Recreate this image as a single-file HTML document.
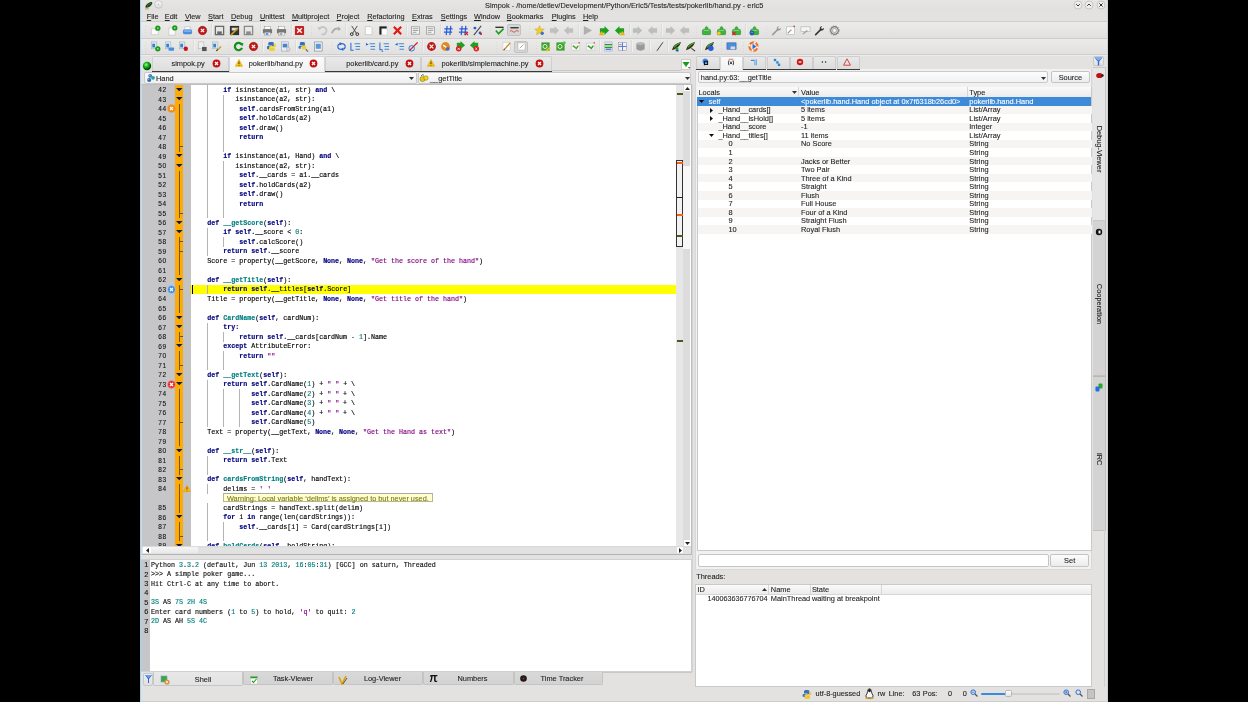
<!DOCTYPE html><html><head><meta charset="utf-8"><style>
*{margin:0;padding:0}
html,body{width:1248px;height:702px;overflow:hidden;background:#000}
div{position:absolute}
.t{white-space:pre;font-family:"Liberation Sans",sans-serif;-webkit-text-stroke:0.1px currentColor}
.m{white-space:pre;font-family:"Liberation Mono",monospace;-webkit-text-stroke:0.15px currentColor}
u{text-decoration:underline;text-underline-offset:1px}
</style></head><body><div style="left:0;top:0;width:1248px;height:702px;will-change:transform"><div style="left:140px;top:0px;width:968px;height:702px;background:#e3e2e1"></div>
<div style="left:140px;top:0px;width:1px;height:702px;background:#a6d2f2"></div>
<div style="left:1107px;top:0px;width:1px;height:702px;background:#d0d0d0"></div>
<div style="left:141px;top:701px;width:966px;height:1px;background:#cdcdcd"></div>
<div style="left:141px;top:0px;width:966px;height:11px;background:linear-gradient(#e6e5e4,#e1e0df)"></div>
<div class="t" style="left:485px;top:0.5px;font-size:7.38px;line-height:10px;color:#262626">Simpok - /home/detlev/Development/Python/Eric5/Tests/tests/pokerlib/hand.py - eric5</div>
<svg style="position:absolute;left:144px;top:0.5px;" width="9" height="9" viewBox="0 0 9 9"><path d="M1.2 6.2Q2 3 6 1.3Q8.6 0.6 8.2 2.4Q7 5.6 2.6 6.8Z" fill="#1e3a12"/><path d="M3 5.2Q5 3.5 7.2 2" stroke="#3aa03a" stroke-width="0.9" fill="none"/><path d="M1.2 7.8H4.8" stroke="#b8a860" stroke-width="1.1"/></svg>
<svg style="position:absolute;left:154.1px;top:0.3px;" width="9" height="9" viewBox="0 0 9 9"><defs><linearGradient id="rb" x1="0" y1="0" x2="0" y2="1"><stop offset="0" stop-color="#fafafa"/><stop offset="1" stop-color="#d8d8d8"/></linearGradient></defs><circle cx="4.5" cy="4.5" r="3.8" fill="url(#rb)" stroke="#bdbdbd" stroke-width="0.7"/><circle cx="4.5" cy="4.3" r="0.5" fill="#999"/></svg>
<svg style="position:absolute;left:1072.5px;top:-0.5px;" width="10" height="10" viewBox="0 0 10 10"><circle cx="5" cy="5" r="4" fill="#eeeeee" stroke="#bdbdbd" stroke-width="0.8"/><path d="M3.2 4.2 L5 6 L6.8 4.2" stroke="#333" stroke-width="1" fill="none"/></svg>
<svg style="position:absolute;left:1084px;top:-0.5px;" width="10" height="10" viewBox="0 0 10 10"><circle cx="5" cy="5" r="4" fill="#eeeeee" stroke="#bdbdbd" stroke-width="0.8"/><path d="M3.2 5.8 L5 4 L6.8 5.8" stroke="#333" stroke-width="1" fill="none"/></svg>
<svg style="position:absolute;left:1095.6px;top:-0.5px;" width="10" height="10" viewBox="0 0 10 10"><circle cx="5" cy="5" r="4" fill="#eeeeee" stroke="#bdbdbd" stroke-width="0.8"/><path d="M3.4 3.4 L6.6 6.6 M6.6 3.4 L3.4 6.6" stroke="#333" stroke-width="1" fill="none"/></svg>
<div class="t" style="left:146.7px;top:12px;font-size:7.3px;line-height:10px;color:#222"><u>F</u>ile</div>
<div class="t" style="left:164.8px;top:12px;font-size:7.3px;line-height:10px;color:#222"><u>E</u>dit</div>
<div class="t" style="left:184.9px;top:12px;font-size:7.3px;line-height:10px;color:#222"><u>V</u>iew</div>
<div class="t" style="left:208.1px;top:12px;font-size:7.3px;line-height:10px;color:#222"><u>S</u>tart</div>
<div class="t" style="left:231px;top:12px;font-size:7.3px;line-height:10px;color:#222"><u>D</u>ebug</div>
<div class="t" style="left:259.9px;top:12px;font-size:7.3px;line-height:10px;color:#222"><u>U</u>nittest</div>
<div class="t" style="left:291.9px;top:12px;font-size:7.3px;line-height:10px;color:#222"><u>M</u>ultiproject</div>
<div class="t" style="left:336.6px;top:12px;font-size:7.3px;line-height:10px;color:#222"><u>P</u>roject</div>
<div class="t" style="left:367.2px;top:12px;font-size:7.3px;line-height:10px;color:#222"><u>R</u>efactoring</div>
<div class="t" style="left:412px;top:12px;font-size:7.3px;line-height:10px;color:#222"><u>E</u>xtras</div>
<div class="t" style="left:440.8px;top:12px;font-size:7.3px;line-height:10px;color:#222"><u>S</u>ettings</div>
<div class="t" style="left:474px;top:12px;font-size:7.3px;line-height:10px;color:#222"><u>W</u>indow</div>
<div class="t" style="left:506.8px;top:12px;font-size:7.3px;line-height:10px;color:#222"><u>B</u>ookmarks</div>
<div class="t" style="left:551.7px;top:12px;font-size:7.3px;line-height:10px;color:#222"><u>P</u>lugins</div>
<div class="t" style="left:583px;top:12px;font-size:7.3px;line-height:10px;color:#222"><u>H</u>elp</div>
<div style="left:141px;top:21px;width:966px;height:1px;background:#cdcdcd"></div>
<div style="left:141px;top:22px;width:966px;height:1px;background:#efefef"></div>
<div style="left:141px;top:22px;width:966px;height:16px;background:linear-gradient(#ebebea,#e1e0df)"></div>
<div style="left:141px;top:38px;width:966px;height:1px;background:#cdcdcd"></div>
<div style="left:141px;top:39px;width:966px;height:1px;background:#efefef"></div>
<div style="left:141px;top:39px;width:966px;height:15px;background:linear-gradient(#ebebea,#e1e0df)"></div>
<div style="left:141px;top:54px;width:966px;height:1px;background:#cdcdcd"></div>
<div style="left:141px;top:55px;width:966px;height:1px;background:#ececec"></div>
<div style="left:144.5px;top:25.5px;width:1px;height:1px;background:#d9d9d9"></div>
<div style="left:144.5px;top:28.5px;width:1px;height:1px;background:#d9d9d9"></div>
<div style="left:144.5px;top:31.5px;width:1px;height:1px;background:#d9d9d9"></div>
<div style="left:144.5px;top:34.5px;width:1px;height:1px;background:#d9d9d9"></div>
<div style="left:507.3px;top:23.8px;width:14.1px;height:12.6px;background:#d6d6d6;border:1px solid #c2c2c2;border-radius:2px;box-sizing:border-box"></div>
<svg style="position:absolute;left:149.6px;top:24.5px" width="11" height="11" viewBox="0 0 12 12"><path d="M1.5 4H9V10.5H1.5Z" fill="#fafafa" stroke="#bbb" stroke-width="0.6"/><circle cx="8.5" cy="3.5" r="2.9" fill="#1a9a1a"/><path d="M8.5 2.6V4.4M7.6 3.5H9.4" stroke="#e8ffe8" stroke-width="0.6"/></svg>
<svg style="position:absolute;left:166.5px;top:24.5px" width="11" height="11" viewBox="0 0 12 12"><path d="M2 3H7L9 5V11H2Z" fill="#fafafa" stroke="#bbb" stroke-width="0.6"/><circle cx="8.5" cy="3.2" r="2.9" fill="#1a9a1a"/><path d="M8.5 2.3V4.1M7.6 3.2H9.4" stroke="#e8ffe8" stroke-width="0.6"/></svg>
<svg style="position:absolute;left:181.9px;top:24.5px" width="11" height="11" viewBox="0 0 12 12"><path d="M3 2H9V5H3Z" fill="#fff" stroke="#9ab" stroke-width="0.5"/><rect x="1" y="5" width="10" height="5" rx="1.5" fill="#4a8ee0"/><rect x="2" y="6" width="8" height="1.2" fill="#9cc4f0"/></svg>
<svg style="position:absolute;left:196.7px;top:24.5px" width="11" height="11" viewBox="0 0 12 12"><circle cx="6" cy="6" r="4.6" fill="#c01818"/><circle cx="6" cy="6" r="4.6" fill="none" stroke="#901010" stroke-width="0.6"/><path d="M4.2 4.2L7.8 7.8M7.8 4.2L4.2 7.8" stroke="#fff" stroke-width="1.3"/></svg>
<div style="left:211.3px;top:24px;width:1px;height:12px;background:#dcdcdc;box-shadow:1px 0 0 #f0f0f0"></div>
<svg style="position:absolute;left:214.2px;top:24.5px" width="11" height="11" viewBox="0 0 12 12"><rect x="1.5" y="1.5" width="9" height="9" fill="none" stroke="#6a6a6a" stroke-width="1.4"/><rect x="3.5" y="7" width="5" height="3" fill="#6a6a6a"/></svg>
<svg style="position:absolute;left:228.7px;top:24.5px" width="11" height="11" viewBox="0 0 12 12"><rect x="1.5" y="1.5" width="9" height="9" fill="#333" stroke="#222" stroke-width="1"/><rect x="3" y="3" width="6" height="3" fill="#ddd"/><path d="M2 11L10 3" stroke="#c9a020" stroke-width="1.8"/></svg>
<svg style="position:absolute;left:243.2px;top:24.5px" width="11" height="11" viewBox="0 0 12 12"><rect x="1.5" y="1.5" width="9" height="9" fill="none" stroke="#8a8a8a" stroke-width="1.4"/><rect x="3.5" y="7" width="5" height="3" fill="#8a8a8a"/></svg>
<div style="left:259.5px;top:24px;width:1px;height:12px;background:#dcdcdc;box-shadow:1px 0 0 #f0f0f0"></div>
<svg style="position:absolute;left:261.5px;top:24.5px" width="11" height="11" viewBox="0 0 12 12"><rect x="3" y="1.5" width="6" height="3" fill="#fff" stroke="#888" stroke-width="0.5"/><rect x="1" y="4.5" width="10" height="4.5" fill="#777"/><rect x="3" y="8" width="6" height="3" fill="#fff" stroke="#888" stroke-width="0.5"/><rect x="4" y="9" width="3" height="1.5" fill="#2a6ad8"/></svg>
<svg style="position:absolute;left:275.9px;top:24.5px" width="11" height="11" viewBox="0 0 12 12"><rect x="3" y="1.5" width="6" height="3" fill="#fff" stroke="#888" stroke-width="0.5"/><rect x="1" y="4.5" width="10" height="4.5" fill="#777"/><rect x="3" y="8" width="6" height="3" fill="#fff" stroke="#888" stroke-width="0.5"/><rect x="4" y="9" width="3" height="1.5" fill="#888"/></svg>
<div style="left:290.5px;top:24px;width:1px;height:12px;background:#dcdcdc;box-shadow:1px 0 0 #f0f0f0"></div>
<svg style="position:absolute;left:293.7px;top:24.5px" width="11" height="11" viewBox="0 0 12 12"><rect x="1" y="1" width="10" height="10" rx="1" fill="#c82020"/><path d="M3.5 3.5L8.5 8.5M8.5 3.5L3.5 8.5" stroke="#fff" stroke-width="1.5"/></svg>
<div style="left:311.3px;top:25.5px;width:1px;height:1px;background:#d9d9d9"></div>
<div style="left:311.3px;top:28.5px;width:1px;height:1px;background:#d9d9d9"></div>
<div style="left:311.3px;top:31.5px;width:1px;height:1px;background:#d9d9d9"></div>
<div style="left:311.3px;top:34.5px;width:1px;height:1px;background:#d9d9d9"></div>
<svg style="position:absolute;left:316.5px;top:24.5px" width="11" height="11" viewBox="0 0 12 12"><path d="M3 4 A4 4 0 1 1 5 10" stroke="#c4c4c4" stroke-width="1.8" fill="none"/><path d="M1 2L5 3L2 6Z" fill="#c4c4c4"/></svg>
<svg style="position:absolute;left:331.3px;top:24.5px" width="11" height="11" viewBox="0 0 12 12"><path d="M1 9 Q3 3 9 4" stroke="#b0b0b0" stroke-width="2.2" fill="none"/><path d="M8 1.5L11 4.5L7.5 6.5Z" fill="#b0b0b0"/></svg>
<div style="left:345.3px;top:24px;width:1px;height:12px;background:#dcdcdc;box-shadow:1px 0 0 #f0f0f0"></div>
<svg style="position:absolute;left:348.5px;top:24.5px" width="11" height="11" viewBox="0 0 12 12"><path d="M3 1L8 9M9 1L4 9" stroke="#444" stroke-width="1"/><circle cx="3" cy="10" r="1.5" fill="none" stroke="#222" stroke-width="1"/><circle cx="9" cy="10" r="1.5" fill="none" stroke="#222" stroke-width="1"/></svg>
<svg style="position:absolute;left:363.3px;top:24.5px" width="11" height="11" viewBox="0 0 12 12"><path d="M2.5 1.5H8L10 3.5V10.5H2.5Z" fill="#fcfcfc" stroke="#bbb" stroke-width="0.7"/></svg>
<svg style="position:absolute;left:377.5px;top:24.5px" width="11" height="11" viewBox="0 0 12 12"><rect x="1.5" y="1.5" width="8" height="9" fill="#222"/><path d="M4 4H10V11H4Z" fill="#fff" stroke="#bbb" stroke-width="0.5"/></svg>
<svg style="position:absolute;left:392.2px;top:24.5px" width="11" height="11" viewBox="0 0 12 12"><path d="M2 2L10 10M10 2L2 10" stroke="#e01818" stroke-width="2.4"/></svg>
<div style="left:406.2px;top:24px;width:1px;height:12px;background:#dcdcdc;box-shadow:1px 0 0 #f0f0f0"></div>
<svg style="position:absolute;left:410.1px;top:24.5px" width="11" height="11" viewBox="0 0 12 12"><rect x="1.5" y="2" width="9" height="8" fill="#f4f4f4" stroke="#888" stroke-width="0.7"/><path d="M3 4H9M3 6H9M3 8H7" stroke="#777" stroke-width="0.7"/></svg>
<svg style="position:absolute;left:424.9px;top:24.5px" width="11" height="11" viewBox="0 0 12 12"><rect x="1.5" y="2" width="9" height="8" fill="#f4f4f4" stroke="#888" stroke-width="0.7"/><path d="M3 4H9M3 6H9M3 8H7" stroke="#777" stroke-width="0.7"/></svg>
<div style="left:439.5px;top:24px;width:1px;height:12px;background:#dcdcdc;box-shadow:1px 0 0 #f0f0f0"></div>
<svg style="position:absolute;left:442.8px;top:24.5px" width="11" height="11" viewBox="0 0 12 12"><path d="M4.5 1L3.5 11M8.5 1L7.5 11M1.5 4.2H10.5M1 7.8H10" stroke="#2a5ad8" stroke-width="1.3"/></svg>
<svg style="position:absolute;left:457.5px;top:24.5px" width="11" height="11" viewBox="0 0 12 12"><path d="M4.5 1L3.5 11M8.5 1L7.5 11M1.5 4.2H10.5M1 7.8H10" stroke="#2a5ad8" stroke-width="1.3"/><path d="M7.5 7.5L11 11M11 7.5L7.5 11" stroke="#d02020" stroke-width="1.2"/></svg>
<svg style="position:absolute;left:471.7px;top:24.5px" width="11" height="11" viewBox="0 0 12 12"><path d="M10 1L2 11" stroke="#444" stroke-width="1.1"/><circle cx="3.2" cy="3.4" r="1.6" fill="#2a5ad8"/><circle cx="8.8" cy="8.6" r="1.6" fill="#2a5ad8"/><circle cx="9.8" cy="9.8" r="1.2" fill="#d02020"/></svg>
<div style="left:489.5px;top:25.5px;width:1px;height:1px;background:#d9d9d9"></div>
<div style="left:489.5px;top:28.5px;width:1px;height:1px;background:#d9d9d9"></div>
<div style="left:489.5px;top:31.5px;width:1px;height:1px;background:#d9d9d9"></div>
<div style="left:489.5px;top:34.5px;width:1px;height:1px;background:#d9d9d9"></div>
<svg style="position:absolute;left:494.1px;top:24.5px" width="11" height="11" viewBox="0 0 12 12"><path d="M1.5 2.5H10.5" stroke="#333" stroke-width="1.5"/><path d="M2 6L5 9.5L10.5 4" stroke="#20a020" stroke-width="1.8" fill="none"/></svg>
<svg style="position:absolute;left:509.0px;top:24.5px" width="11" height="11" viewBox="0 0 12 12"><path d="M1.5 3H10.5" stroke="#333" stroke-width="1.5"/><path d="M1 7Q2.5 5 4 7T7 7T10.5 7" stroke="#e03030" stroke-width="0.9" fill="none"/></svg>
<div style="left:529.2px;top:25.5px;width:1px;height:1px;background:#d9d9d9"></div>
<div style="left:529.2px;top:28.5px;width:1px;height:1px;background:#d9d9d9"></div>
<div style="left:529.2px;top:31.5px;width:1px;height:1px;background:#d9d9d9"></div>
<div style="left:529.2px;top:34.5px;width:1px;height:1px;background:#d9d9d9"></div>
<svg style="position:absolute;left:534.2px;top:24.5px" width="11" height="11" viewBox="0 0 12 12"><path d="M6 0.8L7.5 4.3L11.2 4.5L8.3 6.9L9.3 10.6L6 8.6L2.7 10.6L3.7 6.9L0.8 4.5L4.5 4.3Z" fill="#f2d020" stroke="#c8a010" stroke-width="0.5"/><circle cx="9" cy="9" r="1.8" fill="#3a6ed0"/></svg>
<svg style="position:absolute;left:548.5px;top:24.5px" width="11" height="11" viewBox="0 0 12 12"><path d="M1 3.5H6V1L11 6L6 11V8.5H1Z" fill="#c0c0c0"/></svg>
<svg style="position:absolute;left:563.3px;top:24.5px" width="11" height="11" viewBox="0 0 12 12"><path d="M11 3.5H6V1L1 6L6 11V8.5H11Z" fill="#c0c0c0"/></svg>
<div style="left:578.0px;top:24px;width:1px;height:12px;background:#dcdcdc;box-shadow:1px 0 0 #f0f0f0"></div>
<svg style="position:absolute;left:581.9px;top:24.5px" width="11" height="11" viewBox="0 0 12 12"><path d="M2 1L11 6L2 11Z" fill="#b0b0b0"/></svg>
<svg style="position:absolute;left:599.2px;top:24.5px" width="11" height="11" viewBox="0 0 12 12"><path d="M1 3.5H6V1L11 6L6 11V8.5H1Z" fill="#20a020"/><path d="M3 6.5L5.5 11H0.5Z" fill="#f0c000" stroke="#d09000" stroke-width="0.4"/></svg>
<svg style="position:absolute;left:613.7px;top:24.5px" width="11" height="11" viewBox="0 0 12 12"><path d="M11 3.5H6V1L1 6L6 11V8.5H11Z" fill="#20a020"/><path d="M9 6.5L11.5 11H6.5Z" fill="#f0c000" stroke="#d09000" stroke-width="0.4"/></svg>
<div style="left:628.5px;top:24px;width:1px;height:12px;background:#dcdcdc;box-shadow:1px 0 0 #f0f0f0"></div>
<svg style="position:absolute;left:631.9px;top:24.5px" width="11" height="11" viewBox="0 0 12 12"><path d="M1 3.5H6V1L11 6L6 11V8.5H1Z" fill="#bdbdbd"/></svg>
<svg style="position:absolute;left:646.7px;top:24.5px" width="11" height="11" viewBox="0 0 12 12"><path d="M11 3.5H6V1L1 6L6 11V8.5H11Z" fill="#bdbdbd"/></svg>
<div style="left:661.3px;top:24px;width:1px;height:12px;background:#dcdcdc;box-shadow:1px 0 0 #f0f0f0"></div>
<svg style="position:absolute;left:664.6px;top:24.5px" width="11" height="11" viewBox="0 0 12 12"><path d="M1 3.5H6V1L11 6L6 11V8.5H1Z" fill="#bdbdbd"/></svg>
<svg style="position:absolute;left:679.4px;top:24.5px" width="11" height="11" viewBox="0 0 12 12"><path d="M11 3.5H6V1L1 6L6 11V8.5H11Z" fill="#bdbdbd"/></svg>
<div style="left:695.9px;top:25.5px;width:1px;height:1px;background:#d9d9d9"></div>
<div style="left:695.9px;top:28.5px;width:1px;height:1px;background:#d9d9d9"></div>
<div style="left:695.9px;top:31.5px;width:1px;height:1px;background:#d9d9d9"></div>
<div style="left:695.9px;top:34.5px;width:1px;height:1px;background:#d9d9d9"></div>
<svg style="position:absolute;left:701.2px;top:24.5px" width="11" height="11" viewBox="0 0 12 12"><path d="M1.5 6.5Q1.5 4.5 3.5 4.5H4.5Q4 2 6 1.5Q8 2 7.5 4.5H8.5Q10.5 4.5 10.5 6.5V9.5Q10.5 10.5 9.5 10.5H2.5Q1.5 10.5 1.5 9.5Z" fill="#3cb43c" stroke="#1e7a1e" stroke-width="0.5"/><path d="M3 6H9" stroke="#8ae08a" stroke-width="0.8"/></svg>
<svg style="position:absolute;left:715.9px;top:24.5px" width="11" height="11" viewBox="0 0 12 12"><path d="M1.5 6.5Q1.5 4.5 3.5 4.5H4.5Q4 2 6 1.5Q8 2 7.5 4.5H8.5Q10.5 4.5 10.5 6.5V9.5Q10.5 10.5 9.5 10.5H2.5Q1.5 10.5 1.5 9.5Z" fill="#3cb43c" stroke="#1e7a1e" stroke-width="0.5"/><path d="M3 6H9" stroke="#8ae08a" stroke-width="0.8"/><circle cx="3.2" cy="9" r="2" fill="#f2d020" stroke="#b89010" stroke-width="0.4"/></svg>
<svg style="position:absolute;left:730.7px;top:24.5px" width="11" height="11" viewBox="0 0 12 12"><path d="M1.5 6.5Q1.5 4.5 3.5 4.5H4.5Q4 2 6 1.5Q8 2 7.5 4.5H8.5Q10.5 4.5 10.5 6.5V9.5Q10.5 10.5 9.5 10.5H2.5Q1.5 10.5 1.5 9.5Z" fill="#3cb43c" stroke="#1e7a1e" stroke-width="0.5"/><path d="M3 6H9" stroke="#8ae08a" stroke-width="0.8"/><path d="M1.5 7.5L5 11M5 7.5L1.5 11" stroke="#e02020" stroke-width="1.3"/></svg>
<div style="left:744.5px;top:24px;width:1px;height:12px;background:#dcdcdc;box-shadow:1px 0 0 #f0f0f0"></div>
<svg style="position:absolute;left:748.5px;top:24.5px" width="11" height="11" viewBox="0 0 12 12"><path d="M1.5 6.5Q1.5 4.5 3.5 4.5H4.5Q4 2 6 1.5Q8 2 7.5 4.5H8.5Q10.5 4.5 10.5 6.5V9.5Q10.5 10.5 9.5 10.5H2.5Q1.5 10.5 1.5 9.5Z" fill="#3cb43c" stroke="#1e7a1e" stroke-width="0.5"/><path d="M3 6H9" stroke="#8ae08a" stroke-width="0.8"/><circle cx="3.2" cy="8.8" r="2.7" fill="#2a5aa8"/><path d="M1.8 8.3Q3.2 7 4.6 8.8" stroke="#7ab8f0" stroke-width="0.7" fill="none"/></svg>
<div style="left:765.8px;top:25.5px;width:1px;height:1px;background:#d9d9d9"></div>
<div style="left:765.8px;top:28.5px;width:1px;height:1px;background:#d9d9d9"></div>
<div style="left:765.8px;top:31.5px;width:1px;height:1px;background:#d9d9d9"></div>
<div style="left:765.8px;top:34.5px;width:1px;height:1px;background:#d9d9d9"></div>
<svg style="position:absolute;left:771.0px;top:24.5px" width="11" height="11" viewBox="0 0 12 12"><path d="M1.8 10.5L7 5.3" stroke="#9a9a9a" stroke-width="1.7" stroke-linecap="round"/><path d="M6.3 5.2Q5.6 2.4 8 1.2L8.6 1.1L7.6 3.2L8.8 4.4L10.9 3.4Q10.9 6.3 7.5 6.4Z" fill="#9a9a9a"/></svg>
<svg style="position:absolute;left:785.1px;top:24.5px" width="11" height="11" viewBox="0 0 12 12"><rect x="1.5" y="2" width="9" height="8.5" fill="#fcfcfc" stroke="#aaa" stroke-width="0.6"/><path d="M3 9L7 5" stroke="#999" stroke-width="1.2"/><circle cx="10" cy="1.5" r="0.9" fill="#e03030"/></svg>
<svg style="position:absolute;left:799.9px;top:24.5px" width="11" height="11" viewBox="0 0 12 12"><rect x="1" y="2" width="10" height="5" fill="#f4f4f4" stroke="#aaa" stroke-width="0.6"/><path d="M3 10L8 6" stroke="#999" stroke-width="1.2"/></svg>
<svg style="position:absolute;left:814.0px;top:24.5px" width="11" height="11" viewBox="0 0 12 12"><path d="M1.8 10.5L7 5.3" stroke="#333" stroke-width="1.7" stroke-linecap="round"/><path d="M6.3 5.2Q5.6 2.4 8 1.2L8.6 1.1L7.6 3.2L8.8 4.4L10.9 3.4Q10.9 6.3 7.5 6.4Z" fill="#333"/></svg>
<svg style="position:absolute;left:828.7px;top:24.5px" width="11" height="11" viewBox="0 0 12 12"><circle cx="6" cy="6" r="4.2" fill="#d8d8d8" stroke="#7a7a7a" stroke-width="1.2"/><circle cx="6" cy="6" r="4.9" fill="none" stroke="#8a8a8a" stroke-width="1.2" stroke-dasharray="1.3 1.3"/><circle cx="6" cy="6" r="2.2" fill="#f4f4f4" stroke="#888" stroke-width="0.6"/></svg>
<div style="left:144.5px;top:41.8px;width:1px;height:1px;background:#d9d9d9"></div>
<div style="left:144.5px;top:44.8px;width:1px;height:1px;background:#d9d9d9"></div>
<div style="left:144.5px;top:47.8px;width:1px;height:1px;background:#d9d9d9"></div>
<div style="left:144.5px;top:50.8px;width:1px;height:1px;background:#d9d9d9"></div>
<div style="left:514.4px;top:40.5px;width:13.4px;height:12.2px;background:#d6d6d6;border:1px solid #c2c2c2;border-radius:2px;box-sizing:border-box"></div>
<svg style="position:absolute;left:149.5px;top:40.8px" width="11" height="11" viewBox="0 0 12 12"><rect x="1.5" y="1" width="6" height="7.5" fill="#dfe8f4" stroke="#8aa" stroke-width="0.5"/><rect x="2.5" y="3" width="3" height="4" fill="#3a80d0"/><circle cx="8.5" cy="8.5" r="2.9" fill="#1a9a1a"/><path d="M8.5 7.6V9.4M7.6 8.5H9.4" stroke="#e8ffe8" stroke-width="0.6"/></svg>
<svg style="position:absolute;left:164.0px;top:40.8px" width="11" height="11" viewBox="0 0 12 12"><rect x="1.5" y="1" width="6" height="7.5" fill="#dfe8f4" stroke="#8aa" stroke-width="0.5"/><rect x="2.5" y="3" width="3" height="4" fill="#3a80d0"/><rect x="5" y="7" width="6" height="3.5" rx="0.8" fill="#4a8ee0"/></svg>
<svg style="position:absolute;left:178.1px;top:40.8px" width="11" height="11" viewBox="0 0 12 12"><rect x="1.5" y="1" width="6" height="7.5" fill="#dfe8f4" stroke="#8aa" stroke-width="0.5"/><rect x="2.5" y="3" width="3" height="4" fill="#3a80d0"/><circle cx="8.5" cy="8.5" r="2.4" fill="#c01818"/></svg>
<div style="left:193.3px;top:40.3px;width:1px;height:12px;background:#dcdcdc;box-shadow:1px 0 0 #f0f0f0"></div>
<svg style="position:absolute;left:196.7px;top:40.8px" width="11" height="11" viewBox="0 0 12 12"><rect x="1.5" y="1" width="6" height="7.5" fill="#eee" stroke="#aaa" stroke-width="0.5"/><rect x="5.5" y="6.5" width="5" height="4.5" fill="#555"/></svg>
<svg style="position:absolute;left:211.2px;top:40.8px" width="11" height="11" viewBox="0 0 12 12"><rect x="1.5" y="1" width="6" height="7.5" fill="#dfe8f4" stroke="#8aa" stroke-width="0.5"/><rect x="2.5" y="3" width="3" height="4" fill="#3a80d0"/><path d="M6 11L11 6" stroke="#c9a020" stroke-width="1.6"/><path d="M6 11L7 9" stroke="#222" stroke-width="1"/></svg>
<div style="left:228.0px;top:41.8px;width:1px;height:1px;background:#d9d9d9"></div>
<div style="left:228.0px;top:44.8px;width:1px;height:1px;background:#d9d9d9"></div>
<div style="left:228.0px;top:47.8px;width:1px;height:1px;background:#d9d9d9"></div>
<div style="left:228.0px;top:50.8px;width:1px;height:1px;background:#d9d9d9"></div>
<svg style="position:absolute;left:233.2px;top:40.8px" width="11" height="11" viewBox="0 0 12 12"><path d="M9.5 4 A4 4 0 1 0 9.8 7.5" stroke="#10901a" stroke-width="2.4" fill="none"/><path d="M7.5 2L11.5 2.5L10 6Z" fill="#10901a"/></svg>
<svg style="position:absolute;left:248.0px;top:40.8px" width="11" height="11" viewBox="0 0 12 12"><circle cx="6" cy="6" r="4.6" fill="#c01818"/><circle cx="6" cy="6" r="4.6" fill="none" stroke="#901010" stroke-width="0.6"/><path d="M4.2 4.2L7.8 7.8M7.8 4.2L4.2 7.8" stroke="#fff" stroke-width="1.3"/></svg>
<div style="left:261.9px;top:40.3px;width:1px;height:12px;background:#dcdcdc;box-shadow:1px 0 0 #f0f0f0"></div>
<svg style="position:absolute;left:265.9px;top:40.8px" width="11" height="11" viewBox="0 0 12 12"><path d="M6 1H4Q2.5 1 2.5 2.5V5H6.5V5.5H2Q1 5.5 1 7Q1 9 2.5 9H3.5V7.5Q3.5 6.5 4.5 6.5H7.5Q8.5 6.5 8.5 5.5V2.5Q8.5 1 7 1Z" fill="#3a70b8"/><path d="M6 11H8Q9.5 11 9.5 9.5V7H5.5V6.5H10Q11 6.5 11 5Q11 3 9.5 3H8.5V4.5Q8.5 5.5 7.5 5.5H4.5Q3.5 5.5 3.5 6.5V9.5Q3.5 11 5 11Z" fill="#f0d030"/></svg>
<svg style="position:absolute;left:280.0px;top:40.8px" width="11" height="11" viewBox="0 0 12 12"><rect x="1.5" y="1" width="8" height="10" fill="#e8eef6" stroke="#99a" stroke-width="0.6"/><rect x="3" y="3" width="5" height="4" fill="#4a80c8"/><circle cx="9" cy="9" r="2" fill="#ddd" stroke="#999" stroke-width="0.5"/></svg>
<div style="left:294.5px;top:40.3px;width:1px;height:12px;background:#dcdcdc;box-shadow:1px 0 0 #f0f0f0"></div>
<svg style="position:absolute;left:298.0px;top:40.8px" width="11" height="11" viewBox="0 0 12 12"><path d="M5 1H3.5Q2 1 2 2.5V5H5.5V5.5H1.5Q0.5 5.5 0.5 7Q0.5 8.5 2 8.5H3V7Q3 6 4 6H6.5Q7.5 6 7.5 5V2.5Q7.5 1 6 1Z" fill="#3a70b8"/><circle cx="6.5" cy="7" r="2.5" fill="#f0d030"/><path d="M8.5 9L11 11.5" stroke="#666" stroke-width="1.2"/></svg>
<svg style="position:absolute;left:312.5px;top:40.8px" width="11" height="11" viewBox="0 0 12 12"><rect x="1.5" y="1" width="8.5" height="10" fill="#eef2f8" stroke="#888" stroke-width="0.7"/><rect x="3" y="3" width="5.5" height="5.5" fill="#5a9ad8"/></svg>
<div style="left:330.5px;top:41.8px;width:1px;height:1px;background:#d9d9d9"></div>
<div style="left:330.5px;top:44.8px;width:1px;height:1px;background:#d9d9d9"></div>
<div style="left:330.5px;top:47.8px;width:1px;height:1px;background:#d9d9d9"></div>
<div style="left:330.5px;top:50.8px;width:1px;height:1px;background:#d9d9d9"></div>
<svg style="position:absolute;left:335.5px;top:40.8px" width="11" height="11" viewBox="0 0 12 12"><path d="M2 6A4 3.2 0 0 1 10 6" stroke="#2a6ad8" stroke-width="1.4" fill="none"/><path d="M10 6A4 3.2 0 0 1 2 6" stroke="#2a6ad8" stroke-width="1.4" fill="none"/><path d="M4 1L7 3L4 5Z" fill="#2a6ad8"/><path d="M8 7L5 9L8 11Z" fill="#2a6ad8"/></svg>
<svg style="position:absolute;left:349.9px;top:40.8px" width="11" height="11" viewBox="0 0 12 12"><path d="M5 3H11M6 6H11M6 9H11" stroke="#3a8ae0" stroke-width="1.3"/><path d="M1 2V10H4" stroke="#2a6ad8" stroke-width="1.1" fill="none"/></svg>
<svg style="position:absolute;left:364.5px;top:40.8px" width="11" height="11" viewBox="0 0 12 12"><path d="M5 3H11M6 6H11M6 9H11" stroke="#3a8ae0" stroke-width="1.3"/><path d="M1 2L4 4L1 5Z" fill="#2a6ad8"/></svg>
<svg style="position:absolute;left:378.7px;top:40.8px" width="11" height="11" viewBox="0 0 12 12"><path d="M5 3H11M6 6H11M6 9H11" stroke="#3a8ae0" stroke-width="1.3"/><path d="M1 1.5V9.5H4" stroke="#2a6ad8" stroke-width="1.1" fill="none"/><path d="M3 10L5 11.5L3 12Z" fill="#2a6ad8"/></svg>
<svg style="position:absolute;left:393.5px;top:40.8px" width="11" height="11" viewBox="0 0 12 12"><path d="M5 3H11M6 6H11M6 9H11" stroke="#3a8ae0" stroke-width="1.3"/><path d="M4 2L1 4L4 5Z" fill="#2a6ad8"/></svg>
<svg style="position:absolute;left:407.8px;top:40.8px" width="11" height="11" viewBox="0 0 12 12"><path d="M1.5 10.5L10.5 1.5" stroke="#d02020" stroke-width="1.5"/><circle cx="4" cy="8" r="3" fill="none" stroke="#2a6ad8" stroke-width="1"/></svg>
<div style="left:422.2px;top:40.3px;width:1px;height:12px;background:#dcdcdc;box-shadow:1px 0 0 #f0f0f0"></div>
<svg style="position:absolute;left:425.5px;top:40.8px" width="11" height="11" viewBox="0 0 12 12"><circle cx="6" cy="6" r="4.8" fill="#c01818"/><path d="M4 4L8 8M8 4L4 8" stroke="#fff" stroke-width="1.3"/></svg>
<svg style="position:absolute;left:440.3px;top:40.8px" width="11" height="11" viewBox="0 0 12 12"><circle cx="6" cy="6" r="4.8" fill="#e08a20"/><path d="M3.5 4.5L7 7" stroke="#fff" stroke-width="1.4"/><circle cx="8.5" cy="8.5" r="2" fill="#3a6ed0"/></svg>
<svg style="position:absolute;left:455.0px;top:40.8px" width="11" height="11" viewBox="0 0 12 12"><path d="M2 2H6V0L11 4.5L6 9V7H2Z" fill="#20a020"/><circle cx="4" cy="8.5" r="3" fill="#e02020"/><path d="M3 7.5L5 9.5M5 7.5L3 9.5" stroke="#fff" stroke-width="0.9"/></svg>
<svg style="position:absolute;left:469.1px;top:40.8px" width="11" height="11" viewBox="0 0 12 12"><path d="M10 2H6V0L1 4.5L6 9V7H10Z" fill="#20a020"/><circle cx="8" cy="8.5" r="3" fill="#e02020"/><path d="M7 7.5L9 9.5M9 7.5L7 9.5" stroke="#fff" stroke-width="0.9"/></svg>
<div style="left:495.9px;top:41.8px;width:1px;height:1px;background:#d9d9d9"></div>
<div style="left:495.9px;top:44.8px;width:1px;height:1px;background:#d9d9d9"></div>
<div style="left:495.9px;top:47.8px;width:1px;height:1px;background:#d9d9d9"></div>
<div style="left:495.9px;top:50.8px;width:1px;height:1px;background:#d9d9d9"></div>
<svg style="position:absolute;left:501.2px;top:40.8px" width="11" height="11" viewBox="0 0 12 12"><path d="M2 1.5H10V10.5H2Z" fill="#fcfcfc" stroke="#bbb" stroke-width="0.5"/><path d="M3 10L10 2" stroke="#c09020" stroke-width="1.5"/><path d="M3 10L4 8.5" stroke="#333" stroke-width="0.9"/></svg>
<svg style="position:absolute;left:515.5px;top:40.8px" width="11" height="11" viewBox="0 0 12 12"><path d="M2 2H10V10H2Z" fill="#fff" stroke="#aaa" stroke-width="0.6"/><path d="M4 8L8 4" stroke="#999" stroke-width="0.9"/></svg>
<div style="left:535.5px;top:41.8px;width:1px;height:1px;background:#d9d9d9"></div>
<div style="left:535.5px;top:44.8px;width:1px;height:1px;background:#d9d9d9"></div>
<div style="left:535.5px;top:47.8px;width:1px;height:1px;background:#d9d9d9"></div>
<div style="left:535.5px;top:50.8px;width:1px;height:1px;background:#d9d9d9"></div>
<svg style="position:absolute;left:540.3px;top:40.8px" width="11" height="11" viewBox="0 0 12 12"><path d="M1.5 1.5H10.5V10.5H1.5Z" fill="#40a030"/><circle cx="5.5" cy="6" r="2.2" fill="none" stroke="#e8ffe0" stroke-width="1"/><path d="M6.5 11L11 7" stroke="#f0c020" stroke-width="1.6"/></svg>
<svg style="position:absolute;left:555.0px;top:40.8px" width="11" height="11" viewBox="0 0 12 12"><path d="M1.5 1.5H10.5V10.5H1.5Z" fill="#40a030"/><circle cx="5.5" cy="6" r="2.2" fill="none" stroke="#e8ffe0" stroke-width="1"/><circle cx="10" cy="2" r="1.8" fill="#50d040"/></svg>
<svg style="position:absolute;left:569.8px;top:40.8px" width="11" height="11" viewBox="0 0 12 12"><path d="M1.5 2.5H10.5V10H1.5Z" fill="#f8f8f8" stroke="#bbb" stroke-width="0.5"/><path d="M3 5L7 8L9 5" stroke="#60a040" stroke-width="1.8" fill="none"/><circle cx="10" cy="2" r="0.8" fill="#e03030"/></svg>
<svg style="position:absolute;left:584.5px;top:40.8px" width="11" height="11" viewBox="0 0 12 12"><path d="M1.5 2.5H10.5V10H1.5Z" fill="#f8f8f8" stroke="#bbb" stroke-width="0.5"/><path d="M3 5L7 8L9 5" stroke="#40a030" stroke-width="1.8" fill="none"/><circle cx="10" cy="2" r="0.8" fill="#e03030"/></svg>
<div style="left:599.1px;top:40.3px;width:1px;height:12px;background:#dcdcdc;box-shadow:1px 0 0 #f0f0f0"></div>
<svg style="position:absolute;left:602.5px;top:40.8px" width="11" height="11" viewBox="0 0 12 12"><rect x="2" y="1" width="8" height="10" fill="#dde" stroke="#99a" stroke-width="0.4"/><path d="M2 4H10M2 7H10" stroke="#2a9a2a" stroke-width="1.3"/><path d="M3 9H9" stroke="#2a6ad8" stroke-width="1.2"/></svg>
<svg style="position:absolute;left:617.2px;top:40.8px" width="11" height="11" viewBox="0 0 12 12"><rect x="1.5" y="1.5" width="9" height="9" fill="#f0f0f8" stroke="#99a" stroke-width="0.6"/><path d="M6 1.5V10.5M1.5 6H10.5" stroke="#4a7ad0" stroke-width="1"/><path d="M2.5 4H5" stroke="#d03030" stroke-width="0.8"/></svg>
<div style="left:631.2px;top:40.3px;width:1px;height:12px;background:#dcdcdc;box-shadow:1px 0 0 #f0f0f0"></div>
<svg style="position:absolute;left:635.1px;top:40.8px" width="11" height="11" viewBox="0 0 12 12"><ellipse cx="6" cy="3" rx="4.5" ry="1.8" fill="#b8b8b8"/><path d="M1.5 3V9Q6 12 10.5 9V3Q6 6 1.5 3Z" fill="#999"/></svg>
<div style="left:649.1px;top:40.3px;width:1px;height:12px;background:#dcdcdc;box-shadow:1px 0 0 #f0f0f0"></div>
<svg style="position:absolute;left:653.7px;top:40.8px" width="11" height="11" viewBox="0 0 12 12"><path d="M3 11L10 1" stroke="#333" stroke-width="1"/><path d="M2 1H10V11H2Z" fill="none" stroke="#e4e4e4" stroke-width="0.4"/></svg>
<div style="left:667.1px;top:40.3px;width:1px;height:12px;background:#dcdcdc;box-shadow:1px 0 0 #f0f0f0"></div>
<svg style="position:absolute;left:671.0px;top:40.8px" width="11" height="11" viewBox="0 0 12 12"><path d="M1 10Q2 3 11 1Q9 8 1 10Z" fill="#3a3010"/><path d="M3 7Q6 4 10 2" stroke="#40b040" stroke-width="1.2" fill="none"/><rect x="5" y="7" width="3" height="4" fill="#30a030"/><rect x="6" y="9.5" width="2" height="2" fill="#2050c0"/></svg>
<svg style="position:absolute;left:685.1px;top:40.8px" width="11" height="11" viewBox="0 0 12 12"><path d="M1 10Q2 3 11 1Q9 8 1 10Z" fill="#3a3010"/><path d="M3 7Q6 4 10 2" stroke="#40b040" stroke-width="1.2" fill="none"/><path d="M7 8L11 11" stroke="#333" stroke-width="1.2"/></svg>
<div style="left:700.4px;top:40.3px;width:1px;height:12px;background:#dcdcdc;box-shadow:1px 0 0 #f0f0f0"></div>
<svg style="position:absolute;left:703.7px;top:40.8px" width="11" height="11" viewBox="0 0 12 12"><path d="M1 10Q2 3 11 1Q9 8 1 10Z" fill="#3a3010"/><path d="M3 7Q6 4 10 2" stroke="#40b040" stroke-width="1.2" fill="none"/><circle cx="7.5" cy="8" r="3" fill="#2a5ad8"/></svg>
<div style="left:720.9px;top:41.8px;width:1px;height:1px;background:#d9d9d9"></div>
<div style="left:720.9px;top:44.8px;width:1px;height:1px;background:#d9d9d9"></div>
<div style="left:720.9px;top:47.8px;width:1px;height:1px;background:#d9d9d9"></div>
<div style="left:720.9px;top:50.8px;width:1px;height:1px;background:#d9d9d9"></div>
<svg style="position:absolute;left:725.5px;top:40.8px" width="11" height="11" viewBox="0 0 12 12"><rect x="1" y="2" width="10" height="7" fill="#4a8ee0" stroke="#2a5aa8" stroke-width="0.6"/><rect x="5" y="6" width="5" height="3" fill="#ddd"/></svg>
<div style="left:743.3px;top:41.8px;width:1px;height:1px;background:#d9d9d9"></div>
<div style="left:743.3px;top:44.8px;width:1px;height:1px;background:#d9d9d9"></div>
<div style="left:743.3px;top:47.8px;width:1px;height:1px;background:#d9d9d9"></div>
<div style="left:743.3px;top:50.8px;width:1px;height:1px;background:#d9d9d9"></div>
<svg style="position:absolute;left:748.3px;top:40.8px" width="11" height="11" viewBox="0 0 12 12"><circle cx="6" cy="6" r="4.5" fill="none" stroke="#f07020" stroke-width="2.2"/><circle cx="6" cy="6" r="4.5" fill="none" stroke="#fff" stroke-width="2.2" stroke-dasharray="2 5"/><path d="M5 3L9 6L5 9Z" fill="#2a6ad8"/></svg>
<div style="left:151.5px;top:56.3px;width:77.19999999999999px;height:14.5px;background:linear-gradient(#e9e9e9,#dedede);border:1px solid #cfcfcf;border-bottom:none;border-radius:2px 2px 0 0;box-sizing:border-box"></div>
<div style="left:151.5px;top:70.6px;width:77.19999999999999px;height:1.1px;background:#383838"></div>
<div class="t" style="left:171.5px;top:59.1px;font-size:7.4px;line-height:10px;color:#222">simpok.py</div>
<svg style="position:absolute;left:211.9px;top:58.8px;" width="9" height="9" viewBox="0 0 9 9"><circle cx="4.5" cy="4.5" r="3.9" fill="#c41010"/><path d="M3 3L6 6M6 3L3 6" stroke="#fff" stroke-width="1.3"/></svg>
<div style="left:325.4px;top:56.3px;width:95.90000000000003px;height:14.5px;background:linear-gradient(#e9e9e9,#dedede);border:1px solid #cfcfcf;border-bottom:none;border-radius:2px 2px 0 0;box-sizing:border-box"></div>
<div style="left:325.4px;top:70.6px;width:95.90000000000003px;height:1.1px;background:#383838"></div>
<div class="t" style="left:346.2px;top:59.1px;font-size:7.4px;line-height:10px;color:#222">pokerlib/card.py</div>
<svg style="position:absolute;left:404.5px;top:58.8px;" width="9" height="9" viewBox="0 0 9 9"><circle cx="4.5" cy="4.5" r="3.9" fill="#c41010"/><path d="M3 3L6 6M6 3L3 6" stroke="#fff" stroke-width="1.3"/></svg>
<div style="left:421.3px;top:56.3px;width:130.40000000000003px;height:14.5px;background:linear-gradient(#e9e9e9,#dedede);border:1px solid #cfcfcf;border-bottom:none;border-radius:2px 2px 0 0;box-sizing:border-box"></div>
<div style="left:421.3px;top:70.6px;width:130.40000000000003px;height:1.1px;background:#383838"></div>
<div class="t" style="left:441.4px;top:59.1px;font-size:7.4px;line-height:10px;color:#222">pokerlib/simplemachine.py</div>
<svg style="position:absolute;left:427.3px;top:59px;" width="8" height="8" viewBox="0 0 8 8"><path d="M4 0.5 L7.6 7.3 H0.4Z" fill="#f7c400" stroke="#e2a000" stroke-width="0.6"/><path d="M4 2.6V5" stroke="#333" stroke-width="0.9"/><circle cx="4" cy="6.2" r="0.5" fill="#333"/></svg>
<svg style="position:absolute;left:535.0px;top:58.8px;" width="9" height="9" viewBox="0 0 9 9"><circle cx="4.5" cy="4.5" r="3.9" fill="#c41010"/><path d="M3 3L6 6M6 3L3 6" stroke="#fff" stroke-width="1.3"/></svg>
<div style="left:228.7px;top:56px;width:96.69999999999999px;height:16px;background:linear-gradient(#fbfbfb,#f2f2f2);border:1px solid #d6d6d6;border-bottom:none;border-radius:2px 2px 0 0;box-sizing:border-box"></div>
<div class="t" style="left:248.7px;top:59.1px;font-size:7.4px;line-height:10px;color:#222">pokerlib/hand.py</div>
<svg style="position:absolute;left:235px;top:59px;" width="8" height="8" viewBox="0 0 8 8"><path d="M4 0.5 L7.6 7.3 H0.4Z" fill="#f7c400" stroke="#e2a000" stroke-width="0.6"/><path d="M4 2.6V5" stroke="#333" stroke-width="0.9"/><circle cx="4" cy="6.2" r="0.5" fill="#333"/></svg>
<svg style="position:absolute;left:308.8px;top:58.8px;" width="9" height="9" viewBox="0 0 9 9"><circle cx="4.5" cy="4.5" r="3.9" fill="#c41010"/><path d="M3 3L6 6M6 3L3 6" stroke="#fff" stroke-width="1.3"/></svg>
<div style="left:551.7px;top:70px;width:129px;height:1px;background:#c8c8c8"></div>
<svg style="position:absolute;left:141.5px;top:61px;" width="10" height="10" viewBox="0 0 10 10"><defs><radialGradient id="gl" cx="40%" cy="35%" r="60%"><stop offset="0" stop-color="#8cff8c"/><stop offset="0.5" stop-color="#10b010"/><stop offset="1" stop-color="#064006"/></radialGradient></defs><circle cx="5" cy="5" r="4.2" fill="url(#gl)"/></svg>
<div style="left:680.7px;top:59.4px;width:10.6px;height:10.6px;background:#fafafa;border:1px solid #cfcfcf;box-sizing:border-box"></div>
<svg style="position:absolute;left:682px;top:61px;" width="9" height="8" viewBox="0 0 9 8"><path d="M0.5 1 H7.5 L4 6Z" fill="#1a9a1a"/><path d="M6 6.3H8.4L7.2 7.6Z" fill="#222"/></svg>
<div style="left:143.5px;top:71.5px;width:273px;height:12px;background:linear-gradient(#fbfbfb,#efefef);border:1px solid #c9c9c9;border-radius:2px;box-sizing:border-box"></div>
<div style="left:417.5px;top:71.5px;width:273px;height:12px;background:linear-gradient(#fbfbfb,#efefef);border:1px solid #c9c9c9;border-radius:2px;box-sizing:border-box"></div>
<svg style="position:absolute;left:408.8px;top:76.5px;" width="5" height="3" viewBox="0 0 5 3"><path d="M0 0H5L2.5 3Z" fill="#333"/></svg>
<svg style="position:absolute;left:684.5px;top:76.5px;" width="5" height="3" viewBox="0 0 5 3"><path d="M0 0H5L2.5 3Z" fill="#333"/></svg>
<svg style="position:absolute;left:145.5px;top:73px;" width="10" height="10" viewBox="0 0 10 10"><circle cx="4.2" cy="2.8" r="1.9" fill="#3a78c0"/><circle cx="3.2" cy="7" r="2" fill="#2a68b8"/><circle cx="7" cy="4.8" r="1.9" fill="#30a0a0"/><circle cx="3.8" cy="2.3" r="0.6" fill="#a8d0f0"/><circle cx="2.8" cy="6.5" r="0.6" fill="#a8d0f0"/></svg>
<div class="t" style="left:156px;top:73.6px;font-size:7.4px;line-height:10px;color:#222">Hand</div>
<svg style="position:absolute;left:419px;top:73px;" width="10" height="10" viewBox="0 0 10 10"><circle cx="3.5" cy="6" r="2.6" fill="#e8c810" stroke="#7a6a10" stroke-width="0.5"/><circle cx="7" cy="5" r="2.2" fill="#f0d820" stroke="#7a6a10" stroke-width="0.5"/><path d="M2 3 Q3 0.8 5 2.2" stroke="#445" fill="none" stroke-width="0.8"/></svg>
<div class="t" style="left:430px;top:73.6px;font-size:7.4px;line-height:10px;color:#222">__getTitle</div>
<div style="left:141.00px;top:84.00px;width:551.00px;height:470.80px;background:#fff;border:1px solid #bdbdbd;border-left-color:#dcd8d6;border-bottom-color:#b4b4b4;box-sizing:border-box"></div>
<div style="left:142.00px;top:85.00px;width:32.00px;height:461.00px;background:#c6c6c8"></div>
<div style="left:174.00px;top:85.00px;width:1.00px;height:461.00px;background:#b6c3d6"></div>
<div style="left:175.00px;top:85.00px;width:8.00px;height:461.00px;background:#ffab00"></div>
<div style="left:183.00px;top:85.00px;width:1.00px;height:461.00px;background:#b6c3d6"></div>
<div style="left:184.00px;top:85.00px;width:6.50px;height:461.00px;background:#c3c3c3"></div>
<div style="left:190.5px;top:85px;width:485.5px;height:461px;overflow:hidden;background:#fff">
<div style="left:0.00px;top:199.50px;width:486.00px;height:9.50px;background:#ffff00"></div>
<div style="left:16.80px;top:0.00px;width:1.00px;height:9.50px;background:#b4b4b4"></div>
<div style="left:16.80px;top:9.50px;width:1.00px;height:9.50px;background:#b4b4b4"></div>
<div style="left:32.80px;top:9.50px;width:1.00px;height:9.50px;background:#b4b4b4"></div>
<div style="left:16.80px;top:19.00px;width:1.00px;height:9.50px;background:#b4b4b4"></div>
<div style="left:32.80px;top:19.00px;width:1.00px;height:9.50px;background:#b4b4b4"></div>
<div style="left:16.80px;top:28.50px;width:1.00px;height:9.50px;background:#b4b4b4"></div>
<div style="left:32.80px;top:28.50px;width:1.00px;height:9.50px;background:#b4b4b4"></div>
<div style="left:16.80px;top:38.00px;width:1.00px;height:9.50px;background:#b4b4b4"></div>
<div style="left:32.80px;top:38.00px;width:1.00px;height:9.50px;background:#b4b4b4"></div>
<div style="left:16.80px;top:47.50px;width:1.00px;height:9.50px;background:#b4b4b4"></div>
<div style="left:32.80px;top:47.50px;width:1.00px;height:9.50px;background:#b4b4b4"></div>
<div style="left:16.80px;top:57.00px;width:1.00px;height:9.50px;background:#b4b4b4"></div>
<div style="left:32.80px;top:57.00px;width:1.00px;height:9.50px;background:#b4b4b4"></div>
<div style="left:16.80px;top:66.50px;width:1.00px;height:9.50px;background:#b4b4b4"></div>
<div style="left:16.80px;top:76.00px;width:1.00px;height:9.50px;background:#b4b4b4"></div>
<div style="left:32.80px;top:76.00px;width:1.00px;height:9.50px;background:#b4b4b4"></div>
<div style="left:16.80px;top:85.50px;width:1.00px;height:9.50px;background:#b4b4b4"></div>
<div style="left:32.80px;top:85.50px;width:1.00px;height:9.50px;background:#b4b4b4"></div>
<div style="left:16.80px;top:95.00px;width:1.00px;height:9.50px;background:#b4b4b4"></div>
<div style="left:32.80px;top:95.00px;width:1.00px;height:9.50px;background:#b4b4b4"></div>
<div style="left:16.80px;top:104.50px;width:1.00px;height:9.50px;background:#b4b4b4"></div>
<div style="left:32.80px;top:104.50px;width:1.00px;height:9.50px;background:#b4b4b4"></div>
<div style="left:16.80px;top:114.00px;width:1.00px;height:9.50px;background:#b4b4b4"></div>
<div style="left:32.80px;top:114.00px;width:1.00px;height:9.50px;background:#b4b4b4"></div>
<div style="left:16.80px;top:123.50px;width:1.00px;height:9.50px;background:#b4b4b4"></div>
<div style="left:32.80px;top:123.50px;width:1.00px;height:9.50px;background:#b4b4b4"></div>
<div style="left:16.80px;top:142.50px;width:1.00px;height:9.50px;background:#b4b4b4"></div>
<div style="left:16.80px;top:152.00px;width:1.00px;height:9.50px;background:#b4b4b4"></div>
<div style="left:32.80px;top:152.00px;width:1.00px;height:9.50px;background:#b4b4b4"></div>
<div style="left:16.80px;top:161.50px;width:1.00px;height:9.50px;background:#b4b4b4"></div>
<div style="left:16.80px;top:199.50px;width:1.00px;height:9.50px;background:#b4b4b4"></div>
<div style="left:16.80px;top:237.50px;width:1.00px;height:9.50px;background:#b4b4b4"></div>
<div style="left:16.80px;top:247.00px;width:1.00px;height:9.50px;background:#b4b4b4"></div>
<div style="left:32.80px;top:247.00px;width:1.00px;height:9.50px;background:#b4b4b4"></div>
<div style="left:16.80px;top:256.50px;width:1.00px;height:9.50px;background:#b4b4b4"></div>
<div style="left:16.80px;top:266.00px;width:1.00px;height:9.50px;background:#b4b4b4"></div>
<div style="left:32.80px;top:266.00px;width:1.00px;height:9.50px;background:#b4b4b4"></div>
<div style="left:16.80px;top:275.50px;width:1.00px;height:9.50px;background:#b4b4b4"></div>
<div style="left:32.80px;top:275.50px;width:1.00px;height:9.50px;background:#b4b4b4"></div>
<div style="left:16.80px;top:294.50px;width:1.00px;height:9.50px;background:#b4b4b4"></div>
<div style="left:16.80px;top:304.00px;width:1.00px;height:9.50px;background:#b4b4b4"></div>
<div style="left:32.80px;top:304.00px;width:1.00px;height:9.50px;background:#b4b4b4"></div>
<div style="left:48.80px;top:304.00px;width:1.00px;height:9.50px;background:#b4b4b4"></div>
<div style="left:16.80px;top:313.50px;width:1.00px;height:9.50px;background:#b4b4b4"></div>
<div style="left:32.80px;top:313.50px;width:1.00px;height:9.50px;background:#b4b4b4"></div>
<div style="left:48.80px;top:313.50px;width:1.00px;height:9.50px;background:#b4b4b4"></div>
<div style="left:16.80px;top:323.00px;width:1.00px;height:9.50px;background:#b4b4b4"></div>
<div style="left:32.80px;top:323.00px;width:1.00px;height:9.50px;background:#b4b4b4"></div>
<div style="left:48.80px;top:323.00px;width:1.00px;height:9.50px;background:#b4b4b4"></div>
<div style="left:16.80px;top:332.50px;width:1.00px;height:9.50px;background:#b4b4b4"></div>
<div style="left:32.80px;top:332.50px;width:1.00px;height:9.50px;background:#b4b4b4"></div>
<div style="left:48.80px;top:332.50px;width:1.00px;height:9.50px;background:#b4b4b4"></div>
<div style="left:16.80px;top:370.50px;width:1.00px;height:9.50px;background:#b4b4b4"></div>
<div style="left:16.80px;top:380.00px;width:1.00px;height:9.50px;background:#b4b4b4"></div>
<div style="left:16.80px;top:399.00px;width:1.00px;height:9.50px;background:#b4b4b4"></div>
<div style="left:16.80px;top:418.00px;width:1.00px;height:9.50px;background:#b4b4b4"></div>
<div style="left:16.80px;top:427.50px;width:1.00px;height:9.50px;background:#b4b4b4"></div>
<div style="left:16.80px;top:437.00px;width:1.00px;height:9.50px;background:#b4b4b4"></div>
<div style="left:32.80px;top:437.00px;width:1.00px;height:9.50px;background:#b4b4b4"></div>
<div style="left:16.80px;top:446.50px;width:1.00px;height:9.50px;background:#b4b4b4"></div>
<div style="left:32.80px;top:446.50px;width:1.00px;height:9.50px;background:#b4b4b4"></div>
<div style="left:1.00px;top:200.00px;width:1.00px;height:8.50px;background:#000"></div>
<div class="m" style="left:0.80px;top:0.70px;font-size:6.667px;line-height:9.5px;color:#000">        <b style="color:#00007f">if</b> isinstance(a1, str) <b style="color:#00007f">and</b> \</div>
<div class="m" style="left:0.80px;top:10.20px;font-size:6.667px;line-height:9.5px;color:#000">           isinstance(a2, str):</div>
<div class="m" style="left:0.80px;top:19.70px;font-size:6.667px;line-height:9.5px;color:#000">            <b style="color:#00007f">self</b>.cardsFromString(a1)</div>
<div class="m" style="left:0.80px;top:29.20px;font-size:6.667px;line-height:9.5px;color:#000">            <b style="color:#00007f">self</b>.holdCards(a2)</div>
<div class="m" style="left:0.80px;top:38.70px;font-size:6.667px;line-height:9.5px;color:#000">            <b style="color:#00007f">self</b>.draw()</div>
<div class="m" style="left:0.80px;top:48.20px;font-size:6.667px;line-height:9.5px;color:#000">            <b style="color:#00007f">return</b></div>
<div class="m" style="left:0.80px;top:67.20px;font-size:6.667px;line-height:9.5px;color:#000">        <b style="color:#00007f">if</b> isinstance(a1, Hand) <b style="color:#00007f">and</b> \</div>
<div class="m" style="left:0.80px;top:76.70px;font-size:6.667px;line-height:9.5px;color:#000">           isinstance(a2, str):</div>
<div class="m" style="left:0.80px;top:86.20px;font-size:6.667px;line-height:9.5px;color:#000">            <b style="color:#00007f">self</b>.__cards = a1.__cards</div>
<div class="m" style="left:0.80px;top:95.70px;font-size:6.667px;line-height:9.5px;color:#000">            <b style="color:#00007f">self</b>.holdCards(a2)</div>
<div class="m" style="left:0.80px;top:105.20px;font-size:6.667px;line-height:9.5px;color:#000">            <b style="color:#00007f">self</b>.draw()</div>
<div class="m" style="left:0.80px;top:114.70px;font-size:6.667px;line-height:9.5px;color:#000">            <b style="color:#00007f">return</b></div>
<div class="m" style="left:0.80px;top:133.70px;font-size:6.667px;line-height:9.5px;color:#000">    <b style="color:#00007f">def</b> <b style="color:#007f7f">__getScore</b>(<b style="color:#00007f">self</b>):</div>
<div class="m" style="left:0.80px;top:143.20px;font-size:6.667px;line-height:9.5px;color:#000">        <b style="color:#00007f">if</b> <b style="color:#00007f">self</b>.__score &lt; <span style="color:#007f7f">0</span>:</div>
<div class="m" style="left:0.80px;top:152.70px;font-size:6.667px;line-height:9.5px;color:#000">            <b style="color:#00007f">self</b>.calcScore()</div>
<div class="m" style="left:0.80px;top:162.20px;font-size:6.667px;line-height:9.5px;color:#000">        <b style="color:#00007f">return</b> <b style="color:#00007f">self</b>.__score</div>
<div class="m" style="left:0.80px;top:171.70px;font-size:6.667px;line-height:9.5px;color:#000">    Score = property(__getScore, <b style="color:#00007f">None</b>, <b style="color:#00007f">None</b>, <span style="color:#7f007f">&quot;Get the score of the hand&quot;</span>)</div>
<div class="m" style="left:0.80px;top:190.70px;font-size:6.667px;line-height:9.5px;color:#000">    <b style="color:#00007f">def</b> <b style="color:#007f7f">__getTitle</b>(<b style="color:#00007f">self</b>):</div>
<div class="m" style="left:0.80px;top:200.20px;font-size:6.667px;line-height:9.5px;color:#000">        <b style="color:#00007f">return</b> <b style="color:#00007f">self</b>.__titles[<b style="color:#00007f">self</b>.Score]</div>
<div class="m" style="left:0.80px;top:209.70px;font-size:6.667px;line-height:9.5px;color:#000">    Title = property(__getTitle, <b style="color:#00007f">None</b>, <b style="color:#00007f">None</b>, <span style="color:#7f007f">&quot;Get title of the hand&quot;</span>)</div>
<div class="m" style="left:0.80px;top:228.70px;font-size:6.667px;line-height:9.5px;color:#000">    <b style="color:#00007f">def</b> <b style="color:#007f7f">CardName</b>(<b style="color:#00007f">self</b>, cardNum):</div>
<div class="m" style="left:0.80px;top:238.20px;font-size:6.667px;line-height:9.5px;color:#000">        <b style="color:#00007f">try</b>:</div>
<div class="m" style="left:0.80px;top:247.70px;font-size:6.667px;line-height:9.5px;color:#000">            <b style="color:#00007f">return</b> <b style="color:#00007f">self</b>.__cards[cardNum - <span style="color:#007f7f">1</span>].Name</div>
<div class="m" style="left:0.80px;top:257.20px;font-size:6.667px;line-height:9.5px;color:#000">        <b style="color:#00007f">except</b> AttributeError:</div>
<div class="m" style="left:0.80px;top:266.70px;font-size:6.667px;line-height:9.5px;color:#000">            <b style="color:#00007f">return</b> <span style="color:#7f007f">&quot;&quot;</span></div>
<div class="m" style="left:0.80px;top:285.70px;font-size:6.667px;line-height:9.5px;color:#000">    <b style="color:#00007f">def</b> <b style="color:#007f7f">__getText</b>(<b style="color:#00007f">self</b>):</div>
<div class="m" style="left:0.80px;top:295.20px;font-size:6.667px;line-height:9.5px;color:#000">        <b style="color:#00007f">return</b> <b style="color:#00007f">self</b>.CardName(<span style="color:#007f7f">1</span>) + <span style="color:#7f007f">&quot; &quot;</span> + \</div>
<div class="m" style="left:0.80px;top:304.70px;font-size:6.667px;line-height:9.5px;color:#000">               <b style="color:#00007f">self</b>.CardName(<span style="color:#007f7f">2</span>) + <span style="color:#7f007f">&quot; &quot;</span> + \</div>
<div class="m" style="left:0.80px;top:314.20px;font-size:6.667px;line-height:9.5px;color:#000">               <b style="color:#00007f">self</b>.CardName(<span style="color:#007f7f">3</span>) + <span style="color:#7f007f">&quot; &quot;</span> + \</div>
<div class="m" style="left:0.80px;top:323.70px;font-size:6.667px;line-height:9.5px;color:#000">               <b style="color:#00007f">self</b>.CardName(<span style="color:#007f7f">4</span>) + <span style="color:#7f007f">&quot; &quot;</span> + \</div>
<div class="m" style="left:0.80px;top:333.20px;font-size:6.667px;line-height:9.5px;color:#000">               <b style="color:#00007f">self</b>.CardName(<span style="color:#007f7f">5</span>)</div>
<div class="m" style="left:0.80px;top:342.70px;font-size:6.667px;line-height:9.5px;color:#000">    Text = property(__getText, <b style="color:#00007f">None</b>, <b style="color:#00007f">None</b>, <span style="color:#7f007f">&quot;Get the Hand as text&quot;</span>)</div>
<div class="m" style="left:0.80px;top:361.70px;font-size:6.667px;line-height:9.5px;color:#000">    <b style="color:#00007f">def</b> <b style="color:#007f7f">__str__</b>(<b style="color:#00007f">self</b>):</div>
<div class="m" style="left:0.80px;top:371.20px;font-size:6.667px;line-height:9.5px;color:#000">        <b style="color:#00007f">return</b> <b style="color:#00007f">self</b>.Text</div>
<div class="m" style="left:0.80px;top:390.20px;font-size:6.667px;line-height:9.5px;color:#000">    <b style="color:#00007f">def</b> <b style="color:#007f7f">cardsFromString</b>(<b style="color:#00007f">self</b>, handText):</div>
<div class="m" style="left:0.80px;top:399.70px;font-size:6.667px;line-height:9.5px;color:#000">        delims = <span style="color:#7f007f">&#x27; &#x27;</span></div>
<div class="m" style="left:0.80px;top:418.70px;font-size:6.667px;line-height:9.5px;color:#000">        cardStrings = handText.split(delim)</div>
<div class="m" style="left:0.80px;top:428.20px;font-size:6.667px;line-height:9.5px;color:#000">        <b style="color:#00007f">for</b> i <b style="color:#00007f">in</b> range(len(cardStrings)):</div>
<div class="m" style="left:0.80px;top:437.70px;font-size:6.667px;line-height:9.5px;color:#000">            <b style="color:#00007f">self</b>.__cards[i] = Card(cardStrings[i])</div>
<div class="m" style="left:0.80px;top:456.70px;font-size:6.667px;line-height:9.5px;color:#000">    <b style="color:#00007f">def</b> <b style="color:#007f7f">holdCards</b>(<b style="color:#00007f">self</b>, holdString):</div>
<div style="left:32.20px;top:408.00px;width:210.00px;height:9.40px;background:#ffffd2;border:1px solid #b8b890;border-top-color:#a8a8a8;box-sizing:border-box"></div>
<div class="t" style="left:36.40px;top:408.60px;font-size:7.33px;line-height:9.5px;color:#7a7a14;-webkit-text-stroke:0.1px currentColor">Warning: Local variable ‘delims’ is assigned to but never used.</div>
</div>
<div style="left:0;top:85px;width:676px;height:461px;overflow:hidden">
<div class="t" style="left:148px;width:18.5px;text-align:right;top:0.10px;font-size:6.5px;letter-spacing:0.45px;line-height:9.5px;color:#111">42</div>
<svg style="position:absolute;left:176px;top:2.60px" width="6.5" height="3.5" viewBox="0 0 6.5 3.5"><path d="M0 0H6.5L3.25 3.3Z" fill="#0a1a5a"/></svg>
<div class="t" style="left:148px;width:18.5px;text-align:right;top:9.60px;font-size:6.5px;letter-spacing:0.45px;line-height:9.5px;color:#111">43</div>
<svg style="position:absolute;left:176px;top:12.10px" width="6.5" height="3.5" viewBox="0 0 6.5 3.5"><path d="M0 0H6.5L3.25 3.3Z" fill="#0a1a5a"/></svg>
<div class="t" style="left:148px;width:18.5px;text-align:right;top:19.10px;font-size:6.5px;letter-spacing:0.45px;line-height:9.5px;color:#111">44</div>
<div style="left:179.00px;top:19.00px;width:1.00px;height:9.50px;background:#6e5420"></div>
<div class="t" style="left:148px;width:18.5px;text-align:right;top:28.60px;font-size:6.5px;letter-spacing:0.45px;line-height:9.5px;color:#111">45</div>
<div style="left:179.00px;top:28.50px;width:1.00px;height:9.50px;background:#6e5420"></div>
<div class="t" style="left:148px;width:18.5px;text-align:right;top:38.10px;font-size:6.5px;letter-spacing:0.45px;line-height:9.5px;color:#111">46</div>
<div style="left:179.00px;top:38.00px;width:1.00px;height:9.50px;background:#6e5420"></div>
<div class="t" style="left:148px;width:18.5px;text-align:right;top:47.60px;font-size:6.5px;letter-spacing:0.45px;line-height:9.5px;color:#111">47</div>
<div style="left:179.00px;top:47.50px;width:1.00px;height:9.50px;background:#6e5420"></div>
<div class="t" style="left:148px;width:18.5px;text-align:right;top:57.10px;font-size:6.5px;letter-spacing:0.45px;line-height:9.5px;color:#111">48</div>
<div style="left:179.00px;top:57.00px;width:1.00px;height:9.50px;background:#6e5420"></div>
<div style="left:180.00px;top:61.25px;width:3.00px;height:1.00px;background:#6e5420"></div>
<div class="t" style="left:148px;width:18.5px;text-align:right;top:66.60px;font-size:6.5px;letter-spacing:0.45px;line-height:9.5px;color:#111">49</div>
<svg style="position:absolute;left:176px;top:69.10px" width="6.5" height="3.5" viewBox="0 0 6.5 3.5"><path d="M0 0H6.5L3.25 3.3Z" fill="#0a1a5a"/></svg>
<div class="t" style="left:148px;width:18.5px;text-align:right;top:76.10px;font-size:6.5px;letter-spacing:0.45px;line-height:9.5px;color:#111">50</div>
<svg style="position:absolute;left:176px;top:78.60px" width="6.5" height="3.5" viewBox="0 0 6.5 3.5"><path d="M0 0H6.5L3.25 3.3Z" fill="#0a1a5a"/></svg>
<div class="t" style="left:148px;width:18.5px;text-align:right;top:85.60px;font-size:6.5px;letter-spacing:0.45px;line-height:9.5px;color:#111">51</div>
<div style="left:179.00px;top:85.50px;width:1.00px;height:9.50px;background:#6e5420"></div>
<div class="t" style="left:148px;width:18.5px;text-align:right;top:95.10px;font-size:6.5px;letter-spacing:0.45px;line-height:9.5px;color:#111">52</div>
<div style="left:179.00px;top:95.00px;width:1.00px;height:9.50px;background:#6e5420"></div>
<div class="t" style="left:148px;width:18.5px;text-align:right;top:104.60px;font-size:6.5px;letter-spacing:0.45px;line-height:9.5px;color:#111">53</div>
<div style="left:179.00px;top:104.50px;width:1.00px;height:9.50px;background:#6e5420"></div>
<div class="t" style="left:148px;width:18.5px;text-align:right;top:114.10px;font-size:6.5px;letter-spacing:0.45px;line-height:9.5px;color:#111">54</div>
<div style="left:179.00px;top:114.00px;width:1.00px;height:9.50px;background:#6e5420"></div>
<div class="t" style="left:148px;width:18.5px;text-align:right;top:123.60px;font-size:6.5px;letter-spacing:0.45px;line-height:9.5px;color:#111">55</div>
<div style="left:179.00px;top:123.50px;width:1.00px;height:9.50px;background:#6e5420"></div>
<div style="left:180.00px;top:127.75px;width:3.00px;height:1.00px;background:#6e5420"></div>
<div class="t" style="left:148px;width:18.5px;text-align:right;top:133.10px;font-size:6.5px;letter-spacing:0.45px;line-height:9.5px;color:#111">56</div>
<svg style="position:absolute;left:176px;top:135.60px" width="6.5" height="3.5" viewBox="0 0 6.5 3.5"><path d="M0 0H6.5L3.25 3.3Z" fill="#0a1a5a"/></svg>
<div class="t" style="left:148px;width:18.5px;text-align:right;top:142.60px;font-size:6.5px;letter-spacing:0.45px;line-height:9.5px;color:#111">57</div>
<svg style="position:absolute;left:176px;top:145.10px" width="6.5" height="3.5" viewBox="0 0 6.5 3.5"><path d="M0 0H6.5L3.25 3.3Z" fill="#0a1a5a"/></svg>
<div class="t" style="left:148px;width:18.5px;text-align:right;top:152.10px;font-size:6.5px;letter-spacing:0.45px;line-height:9.5px;color:#111">58</div>
<div style="left:179.00px;top:152.00px;width:1.00px;height:9.50px;background:#6e5420"></div>
<div style="left:180.00px;top:156.25px;width:3.00px;height:1.00px;background:#6e5420"></div>
<div class="t" style="left:148px;width:18.5px;text-align:right;top:161.60px;font-size:6.5px;letter-spacing:0.45px;line-height:9.5px;color:#111">59</div>
<div style="left:179.00px;top:161.50px;width:1.00px;height:9.50px;background:#6e5420"></div>
<div style="left:180.00px;top:165.75px;width:3.00px;height:1.00px;background:#6e5420"></div>
<div class="t" style="left:148px;width:18.5px;text-align:right;top:171.10px;font-size:6.5px;letter-spacing:0.45px;line-height:9.5px;color:#111">60</div>
<div style="left:179.00px;top:171.00px;width:1.00px;height:9.50px;background:#6e5420"></div>
<div class="t" style="left:148px;width:18.5px;text-align:right;top:180.60px;font-size:6.5px;letter-spacing:0.45px;line-height:9.5px;color:#111">61</div>
<div style="left:179.00px;top:180.50px;width:1.00px;height:9.50px;background:#6e5420"></div>
<div class="t" style="left:148px;width:18.5px;text-align:right;top:190.10px;font-size:6.5px;letter-spacing:0.45px;line-height:9.5px;color:#111">62</div>
<svg style="position:absolute;left:176px;top:192.60px" width="6.5" height="3.5" viewBox="0 0 6.5 3.5"><path d="M0 0H6.5L3.25 3.3Z" fill="#0a1a5a"/></svg>
<div class="t" style="left:148px;width:18.5px;text-align:right;top:199.60px;font-size:6.5px;letter-spacing:0.45px;line-height:9.5px;color:#111">63</div>
<div style="left:179.00px;top:199.50px;width:1.00px;height:9.50px;background:#6e5420"></div>
<div style="left:180.00px;top:203.75px;width:3.00px;height:1.00px;background:#6e5420"></div>
<div class="t" style="left:148px;width:18.5px;text-align:right;top:209.10px;font-size:6.5px;letter-spacing:0.45px;line-height:9.5px;color:#111">64</div>
<div style="left:179.00px;top:209.00px;width:1.00px;height:9.50px;background:#6e5420"></div>
<div class="t" style="left:148px;width:18.5px;text-align:right;top:218.60px;font-size:6.5px;letter-spacing:0.45px;line-height:9.5px;color:#111">65</div>
<div style="left:179.00px;top:218.50px;width:1.00px;height:9.50px;background:#6e5420"></div>
<div class="t" style="left:148px;width:18.5px;text-align:right;top:228.10px;font-size:6.5px;letter-spacing:0.45px;line-height:9.5px;color:#111">66</div>
<svg style="position:absolute;left:176px;top:230.60px" width="6.5" height="3.5" viewBox="0 0 6.5 3.5"><path d="M0 0H6.5L3.25 3.3Z" fill="#0a1a5a"/></svg>
<div class="t" style="left:148px;width:18.5px;text-align:right;top:237.60px;font-size:6.5px;letter-spacing:0.45px;line-height:9.5px;color:#111">67</div>
<svg style="position:absolute;left:176px;top:240.10px" width="6.5" height="3.5" viewBox="0 0 6.5 3.5"><path d="M0 0H6.5L3.25 3.3Z" fill="#0a1a5a"/></svg>
<div class="t" style="left:148px;width:18.5px;text-align:right;top:247.10px;font-size:6.5px;letter-spacing:0.45px;line-height:9.5px;color:#111">68</div>
<div style="left:179.00px;top:247.00px;width:1.00px;height:9.50px;background:#6e5420"></div>
<div style="left:180.00px;top:251.25px;width:3.00px;height:1.00px;background:#6e5420"></div>
<div class="t" style="left:148px;width:18.5px;text-align:right;top:256.60px;font-size:6.5px;letter-spacing:0.45px;line-height:9.5px;color:#111">69</div>
<svg style="position:absolute;left:176px;top:259.10px" width="6.5" height="3.5" viewBox="0 0 6.5 3.5"><path d="M0 0H6.5L3.25 3.3Z" fill="#0a1a5a"/></svg>
<div class="t" style="left:148px;width:18.5px;text-align:right;top:266.10px;font-size:6.5px;letter-spacing:0.45px;line-height:9.5px;color:#111">70</div>
<div style="left:179.00px;top:266.00px;width:1.00px;height:9.50px;background:#6e5420"></div>
<div class="t" style="left:148px;width:18.5px;text-align:right;top:275.60px;font-size:6.5px;letter-spacing:0.45px;line-height:9.5px;color:#111">71</div>
<div style="left:179.00px;top:275.50px;width:1.00px;height:9.50px;background:#6e5420"></div>
<div style="left:180.00px;top:279.75px;width:3.00px;height:1.00px;background:#6e5420"></div>
<div class="t" style="left:148px;width:18.5px;text-align:right;top:285.10px;font-size:6.5px;letter-spacing:0.45px;line-height:9.5px;color:#111">72</div>
<svg style="position:absolute;left:176px;top:287.60px" width="6.5" height="3.5" viewBox="0 0 6.5 3.5"><path d="M0 0H6.5L3.25 3.3Z" fill="#0a1a5a"/></svg>
<div class="t" style="left:148px;width:18.5px;text-align:right;top:294.60px;font-size:6.5px;letter-spacing:0.45px;line-height:9.5px;color:#111">73</div>
<svg style="position:absolute;left:176px;top:297.10px" width="6.5" height="3.5" viewBox="0 0 6.5 3.5"><path d="M0 0H6.5L3.25 3.3Z" fill="#0a1a5a"/></svg>
<div class="t" style="left:148px;width:18.5px;text-align:right;top:304.10px;font-size:6.5px;letter-spacing:0.45px;line-height:9.5px;color:#111">74</div>
<div style="left:179.00px;top:304.00px;width:1.00px;height:9.50px;background:#6e5420"></div>
<div class="t" style="left:148px;width:18.5px;text-align:right;top:313.60px;font-size:6.5px;letter-spacing:0.45px;line-height:9.5px;color:#111">75</div>
<div style="left:179.00px;top:313.50px;width:1.00px;height:9.50px;background:#6e5420"></div>
<div class="t" style="left:148px;width:18.5px;text-align:right;top:323.10px;font-size:6.5px;letter-spacing:0.45px;line-height:9.5px;color:#111">76</div>
<div style="left:179.00px;top:323.00px;width:1.00px;height:9.50px;background:#6e5420"></div>
<div class="t" style="left:148px;width:18.5px;text-align:right;top:332.60px;font-size:6.5px;letter-spacing:0.45px;line-height:9.5px;color:#111">77</div>
<div style="left:179.00px;top:332.50px;width:1.00px;height:9.50px;background:#6e5420"></div>
<div style="left:180.00px;top:336.75px;width:3.00px;height:1.00px;background:#6e5420"></div>
<div class="t" style="left:148px;width:18.5px;text-align:right;top:342.10px;font-size:6.5px;letter-spacing:0.45px;line-height:9.5px;color:#111">78</div>
<div style="left:179.00px;top:342.00px;width:1.00px;height:9.50px;background:#6e5420"></div>
<div class="t" style="left:148px;width:18.5px;text-align:right;top:351.60px;font-size:6.5px;letter-spacing:0.45px;line-height:9.5px;color:#111">79</div>
<div style="left:179.00px;top:351.50px;width:1.00px;height:9.50px;background:#6e5420"></div>
<div class="t" style="left:148px;width:18.5px;text-align:right;top:361.10px;font-size:6.5px;letter-spacing:0.45px;line-height:9.5px;color:#111">80</div>
<svg style="position:absolute;left:176px;top:363.60px" width="6.5" height="3.5" viewBox="0 0 6.5 3.5"><path d="M0 0H6.5L3.25 3.3Z" fill="#0a1a5a"/></svg>
<div class="t" style="left:148px;width:18.5px;text-align:right;top:370.60px;font-size:6.5px;letter-spacing:0.45px;line-height:9.5px;color:#111">81</div>
<div style="left:179.00px;top:370.50px;width:1.00px;height:9.50px;background:#6e5420"></div>
<div class="t" style="left:148px;width:18.5px;text-align:right;top:380.10px;font-size:6.5px;letter-spacing:0.45px;line-height:9.5px;color:#111">82</div>
<div style="left:179.00px;top:380.00px;width:1.00px;height:9.50px;background:#6e5420"></div>
<div style="left:180.00px;top:384.25px;width:3.00px;height:1.00px;background:#6e5420"></div>
<div class="t" style="left:148px;width:18.5px;text-align:right;top:389.60px;font-size:6.5px;letter-spacing:0.45px;line-height:9.5px;color:#111">83</div>
<svg style="position:absolute;left:176px;top:392.10px" width="6.5" height="3.5" viewBox="0 0 6.5 3.5"><path d="M0 0H6.5L3.25 3.3Z" fill="#0a1a5a"/></svg>
<div class="t" style="left:148px;width:18.5px;text-align:right;top:399.10px;font-size:6.5px;letter-spacing:0.45px;line-height:9.5px;color:#111">84</div>
<div style="left:179.00px;top:399.00px;width:1.00px;height:19.00px;background:#6e5420"></div>
<div class="t" style="left:148px;width:18.5px;text-align:right;top:418.10px;font-size:6.5px;letter-spacing:0.45px;line-height:9.5px;color:#111">85</div>
<div style="left:179.00px;top:418.00px;width:1.00px;height:9.50px;background:#6e5420"></div>
<div class="t" style="left:148px;width:18.5px;text-align:right;top:427.60px;font-size:6.5px;letter-spacing:0.45px;line-height:9.5px;color:#111">86</div>
<svg style="position:absolute;left:176px;top:430.10px" width="6.5" height="3.5" viewBox="0 0 6.5 3.5"><path d="M0 0H6.5L3.25 3.3Z" fill="#0a1a5a"/></svg>
<div class="t" style="left:148px;width:18.5px;text-align:right;top:437.10px;font-size:6.5px;letter-spacing:0.45px;line-height:9.5px;color:#111">87</div>
<div style="left:179.00px;top:437.00px;width:1.00px;height:9.50px;background:#6e5420"></div>
<div class="t" style="left:148px;width:18.5px;text-align:right;top:446.60px;font-size:6.5px;letter-spacing:0.45px;line-height:9.5px;color:#111">88</div>
<div style="left:179.00px;top:446.50px;width:1.00px;height:9.50px;background:#6e5420"></div>
<div style="left:180.00px;top:450.75px;width:3.00px;height:1.00px;background:#6e5420"></div>
<div class="t" style="left:148px;width:18.5px;text-align:right;top:456.10px;font-size:6.5px;letter-spacing:0.45px;line-height:9.5px;color:#111">89</div>
<svg style="position:absolute;left:176px;top:458.60px" width="6.5" height="3.5" viewBox="0 0 6.5 3.5"><path d="M0 0H6.5L3.25 3.3Z" fill="#0a1a5a"/></svg>
</div>
<svg style="position:absolute;left:166.90px;top:104.25px" width="9" height="9" viewBox="0 0 9 9"><circle cx="4.5" cy="4.5" r="3.9" fill="#f08a10" stroke="#f0a040" stroke-width="0.5"/><path d="M3 3L6 6M6 3L3 6" stroke="#fff" stroke-width="1.2"/></svg>
<svg style="position:absolute;left:166.90px;top:284.75px" width="9" height="9" viewBox="0 0 9 9"><circle cx="4.5" cy="4.5" r="3.9" fill="#3a8ae8" stroke="#c0e0ff" stroke-width="0.5"/><path d="M3 3L6 6M6 3L3 6" stroke="#fff" stroke-width="1.2"/></svg>
<svg style="position:absolute;left:166.90px;top:379.75px" width="9" height="9" viewBox="0 0 9 9"><circle cx="4.5" cy="4.5" r="3.9" fill="#e03030" stroke="#ffb0b0" stroke-width="0.5"/><path d="M3 3L6 6M6 3L3 6" stroke="#fff" stroke-width="1.2"/></svg>
<svg style="position:absolute;left:182.50px;top:485.25px" width="8" height="7" viewBox="0 0 8 7"><path d="M4 0.3L7.7 6.7H0.3Z" fill="#f8c800" stroke="#d89000" stroke-width="0.5"/><path d="M4 2.2V4.6" stroke="#d01010" stroke-width="1"/><circle cx="4" cy="5.7" r="0.5" fill="#d01010"/></svg>
<div style="left:676.00px;top:85.00px;width:7.20px;height:461.00px;background:#e7e7e7"></div>
<div style="left:683.20px;top:85.00px;width:7.30px;height:461.00px;background:#dcdcdc"></div>
<div style="left:683.80px;top:85.00px;width:6.40px;height:6.20px;background:#fff"></div>
<svg style="position:absolute;left:684.5px;top:86.5px" width="5" height="3" viewBox="0 0 5 3"><path d="M0 3H5L2.5 0Z" fill="#222"/></svg>
<div style="left:683.80px;top:540.00px;width:6.40px;height:6.00px;background:#fff"></div>
<svg style="position:absolute;left:684.5px;top:541.5px" width="5" height="3" viewBox="0 0 5 3"><path d="M0 0H5L2.5 3Z" fill="#222"/></svg>
<div style="left:683.40px;top:165.70px;width:7.00px;height:83.30px;background:#f8f8f8"></div>
<div style="left:676.50px;top:93.20px;width:6.30px;height:1.80px;background:#54541a"></div>
<div style="left:676.30px;top:160.30px;width:6.80px;height:87.20px;border:1px solid #333;box-sizing:border-box;background:#f2f2f2"></div>
<div style="left:677.00px;top:162.30px;width:5.50px;height:1.50px;background:#ff5a1a"></div>
<div style="left:677.00px;top:196.80px;width:5.50px;height:1.20px;background:#222"></div>
<div style="left:677.00px;top:214.30px;width:5.50px;height:1.50px;background:#ff5a1a"></div>
<div style="left:677.00px;top:235.30px;width:5.50px;height:1.50px;background:#54541a"></div>
<div style="left:676.50px;top:340.00px;width:6.30px;height:1.50px;background:#54541a"></div>
<div style="left:142.00px;top:546.00px;width:548.50px;height:7.80px;background:linear-gradient(#d8d8d8,#e2e2e2 30%,#e0e0e0)"></div>
<div style="left:143.00px;top:546.50px;width:8.00px;height:6.00px;background:#fff"></div>
<svg style="position:absolute;left:146px;top:547.5px" width="3" height="5" viewBox="0 0 3 5"><path d="M3 0V5L0 2.5Z" fill="#222"/></svg>
<div style="left:151.00px;top:546.50px;width:47.00px;height:6.00px;background:linear-gradient(#f6f6f6,#e8e8e8);border-radius:1px"></div>
<div style="left:676.60px;top:546.50px;width:6.80px;height:6.00px;background:#fff"></div>
<svg style="position:absolute;left:679px;top:547.5px" width="3" height="5" viewBox="0 0 3 5"><path d="M0 0V5L3 2.5Z" fill="#222"/></svg>
<div style="left:141.00px;top:559.30px;width:551.00px;height:112.70px;background:#fff;border:1px solid #d0d0d0;box-sizing:border-box"></div>
<div style="left:141.30px;top:560.00px;width:8.50px;height:111.00px;background:#c6c6c8"></div>
<div class="t" style="left:142.50px;top:560.10px;width:7.5px;text-align:center;font-size:7.4px;line-height:9.5px;color:#111">1</div>
<div class="m" style="left:150.90px;top:560.70px;font-size:6.69px;line-height:9.5px;color:#111">Python <span style="color:#007f7f">3</span>.<span style="color:#007f7f">3</span>.<span style="color:#007f7f">2</span> (default, Jun <span style="color:#007f7f">13</span> <span style="color:#007f7f">2013</span>, <span style="color:#007f7f">16</span>:<span style="color:#007f7f">05</span>:<span style="color:#007f7f">31</span>) [GCC] on saturn, Threaded</div>
<div class="t" style="left:142.50px;top:569.53px;width:7.5px;text-align:center;font-size:7.4px;line-height:9.5px;color:#111">2</div>
<div class="m" style="left:150.90px;top:570.13px;font-size:6.69px;line-height:9.5px;color:#111">&gt;&gt;&gt; A simple poker game...</div>
<div class="t" style="left:142.50px;top:578.96px;width:7.5px;text-align:center;font-size:7.4px;line-height:9.5px;color:#111">3</div>
<div class="m" style="left:150.90px;top:579.56px;font-size:6.69px;line-height:9.5px;color:#111">Hit Ctrl-C at any time to abort.</div>
<div class="t" style="left:142.50px;top:588.39px;width:7.5px;text-align:center;font-size:7.4px;line-height:9.5px;color:#111">4</div>
<div class="t" style="left:142.50px;top:597.82px;width:7.5px;text-align:center;font-size:7.4px;line-height:9.5px;color:#111">5</div>
<div class="m" style="left:150.90px;top:598.42px;font-size:6.69px;line-height:9.5px;color:#111"><span style="color:#007f7f">3S</span> AS <span style="color:#007f7f">7S</span> <span style="color:#007f7f">2H</span> <span style="color:#007f7f">4S</span></div>
<div class="t" style="left:142.50px;top:607.25px;width:7.5px;text-align:center;font-size:7.4px;line-height:9.5px;color:#111">6</div>
<div class="m" style="left:150.90px;top:607.85px;font-size:6.69px;line-height:9.5px;color:#111">Enter card numbers (<span style="color:#007f7f">1</span> to <span style="color:#007f7f">5</span>) to hold, <span style="color:#7f007f">&#x27;q&#x27;</span> to quit: <span style="color:#007f7f">2</span></div>
<div class="t" style="left:142.50px;top:616.68px;width:7.5px;text-align:center;font-size:7.4px;line-height:9.5px;color:#111">7</div>
<div class="m" style="left:150.90px;top:617.28px;font-size:6.69px;line-height:9.5px;color:#111"><span style="color:#007f7f">2D</span> AS AH <span style="color:#007f7f">5S</span> <span style="color:#007f7f">4C</span></div>
<div class="t" style="left:142.50px;top:626.11px;width:7.5px;text-align:center;font-size:7.4px;line-height:9.5px;color:#111">8</div>
<div style="left:142.50px;top:672.50px;width:10.50px;height:13.00px;background:linear-gradient(#f0f0f0,#e0e0e0);border:1px solid #c8c8c8;box-sizing:border-box;border-radius:2px"></div>
<svg style="position:absolute;left:143.50px;top:674.00px" width="9" height="10" viewBox="0 0 9 10"><path d="M1 1H8L5 5V9H4V5Z" fill="#2a6ad8"/><path d="M1 1H8L4.5 4Z" fill="#6aa0f0"/></svg>
<div style="left:152.80px;top:671.50px;width:90.40px;height:14.50px;background:linear-gradient(#e8e8e8,#e2e2e2);border:1px solid #c6c6c6;border-top:none;box-sizing:border-box;border-radius:0 0 2px 2px"></div>
<div class="t" style="left:163.00px;top:674.80px;width:80px;text-align:center;font-size:7.4px;line-height:10px;color:#222">Shell</div>
<div style="left:243.20px;top:671.50px;width:90.00px;height:13.50px;background:linear-gradient(#d9d9d9,#d3d3d3);border:1px solid #c4c4c4;border-top:none;box-sizing:border-box;border-radius:0 0 2px 2px"></div>
<div class="t" style="left:253.00px;top:674.20px;width:80px;text-align:center;font-size:7.4px;line-height:10px;color:#222">Task-Viewer</div>
<div style="left:333.20px;top:671.50px;width:89.80px;height:13.50px;background:linear-gradient(#d9d9d9,#d3d3d3);border:1px solid #c4c4c4;border-top:none;box-sizing:border-box;border-radius:0 0 2px 2px"></div>
<div class="t" style="left:342.50px;top:674.20px;width:80px;text-align:center;font-size:7.4px;line-height:10px;color:#222">Log-Viewer</div>
<div style="left:423.00px;top:671.50px;width:90.60px;height:13.50px;background:linear-gradient(#d9d9d9,#d3d3d3);border:1px solid #c4c4c4;border-top:none;box-sizing:border-box;border-radius:0 0 2px 2px"></div>
<div class="t" style="left:432.50px;top:674.20px;width:80px;text-align:center;font-size:7.4px;line-height:10px;color:#222">Numbers</div>
<div style="left:513.60px;top:671.50px;width:89.00px;height:13.50px;background:linear-gradient(#d9d9d9,#d3d3d3);border:1px solid #c4c4c4;border-top:none;box-sizing:border-box;border-radius:0 0 2px 2px"></div>
<div class="t" style="left:522.00px;top:674.20px;width:80px;text-align:center;font-size:7.4px;line-height:10px;color:#222">Time Tracker</div>
<div style="left:602.60px;top:671.50px;width:89.00px;height:1.00px;background:#c8c8c8"></div>
<svg style="position:absolute;left:159.50px;top:674.50px" width="10" height="10" viewBox="0 0 10 10"><rect x="1" y="1" width="6" height="6" fill="#3aa83a" stroke="#7aa0d8" stroke-width="0.6"/><circle cx="7" cy="7" r="2.6" fill="#e09040"/><circle cx="7" cy="7" r="1" fill="#fff"/></svg>
<svg style="position:absolute;left:248.50px;top:674.50px" width="10" height="10" viewBox="0 0 10 10"><rect x="1.5" y="1.5" width="7" height="7.5" fill="#fff" stroke="#bbb" stroke-width="0.5"/><rect x="1.5" y="1.5" width="7" height="1.8" fill="#2a9a2a"/><path d="M3 6L4.5 7.5L7.5 4" stroke="#1a9a1a" stroke-width="1.1" fill="none"/></svg>
<svg style="position:absolute;left:338.00px;top:674.50px" width="10" height="10" viewBox="0 0 10 10"><path d="M1 2L4 9L8 1" stroke="#e0a000" stroke-width="1.6" fill="none"/><path d="M5 9L9 3" stroke="#333" stroke-width="0.8"/></svg>
<svg style="position:absolute;left:428.60px;top:674.30px" width="9" height="8" viewBox="0 0 9 8"><path d="M0.8 2.2Q1.2 0.9 2.6 0.9H8.4V2.3H6.6V6Q6.6 6.9 7.5 6.9L8.2 6.6L8.3 7.4Q7.6 8 6.7 8Q5.1 8 5.1 6.4V2.3H3.6Q3.4 5.8 2.2 7.9H0.8Q2.1 5.5 2.2 2.3Q1.5 2.3 1.3 2.7Z" fill="#111"/></svg>
<svg style="position:absolute;left:518.50px;top:673.90px" width="9" height="9" viewBox="0 0 9 9"><circle cx="4.5" cy="4.5" r="3.3" fill="#1a1a1a"/><circle cx="4.5" cy="4.5" r="1" fill="#c02020"/></svg>
<svg style="position:absolute;left:801.50px;top:688.50px" width="10" height="11" viewBox="0 0 10 11"><path d="M5 1H3.5Q2 1 2 2.5V4.5H5.5V5H1.5Q0.5 5 0.5 6.5Q0.5 8 2 8H3V6.5Q3 5.5 4 5.5H6.5Q7.5 5.5 7.5 4.5V2.5Q7.5 1 6 1Z" fill="#3a70b8"/><path d="M5 10H6.5Q8 10 8 8.5V6.5H4.5V6H8.5Q9.5 6 9.5 4.5Q9.5 3 8 3H7V4.5Q7 5.5 6 5.5H3.5Q2.5 5.5 2.5 6.5V8.5Q2.5 10 4 10Z" fill="#f0c830"/></svg>
<div class="t" style="left:815.60px;top:689.10px;font-size:7.3px;line-height:10px;color:#222">utf-8-guessed</div>
<svg style="position:absolute;left:864.50px;top:688.00px" width="9" height="12" viewBox="0 0 9 12"><path d="M4.5 0.8Q6.3 0.8 6.3 3.2Q6.5 5 8 7.5Q8.6 9.5 6.5 10H2.5Q0.4 9.5 1 7.5Q2.5 5 2.7 3.2Q2.7 0.8 4.5 0.8Z" fill="#f8f8f8" stroke="#222" stroke-width="0.9"/><ellipse cx="4.5" cy="2.6" rx="1.4" ry="1.6" fill="#222"/><path d="M0.5 10.3Q1.5 8.8 3.2 10.8ZM8.5 10.3Q7.5 8.8 5.8 10.8Z" fill="#f0b010" stroke="#f0a000" stroke-width="0.9"/></svg>
<div class="t" style="left:877.50px;top:689.10px;font-size:7.3px;line-height:10px;color:#222">rw</div>
<div class="t" style="left:888.70px;top:689.10px;font-size:7.3px;line-height:10px;color:#222">Line:</div>
<div class="t" style="left:912.20px;top:689.10px;font-size:7.3px;line-height:10px;color:#222">63</div>
<div class="t" style="left:922.80px;top:689.10px;font-size:7.3px;line-height:10px;color:#222">Pos:</div>
<div class="t" style="left:947.90px;top:689.10px;font-size:7.3px;line-height:10px;color:#222">0</div>
<div class="t" style="left:962.80px;top:689.10px;font-size:7.3px;line-height:10px;color:#222">0</div>
<svg style="position:absolute;left:969.50px;top:689.00px" width="8" height="8" viewBox="0 0 8 8"><circle cx="3.2" cy="3.2" r="2.3" fill="none" stroke="#2a6ad8" stroke-width="1"/><path d="M5 5L7.5 7.5" stroke="#555" stroke-width="1.2"/><path d="M2 3.2H4.4" stroke="#2a6ad8" stroke-width="0.8"/></svg>
<div style="left:981.20px;top:692.80px;width:79.00px;height:2.50px;background:linear-gradient(90deg,#3a8ae0 0,#3a8ae0 35%,#cfcfcf 35%);border-radius:1px"></div>
<div style="left:1004.50px;top:690.00px;width:7.00px;height:6.50px;background:linear-gradient(#fdfdfd,#e4e4e4);border:1px solid #b8b8b8;box-sizing:border-box;border-radius:1.5px"></div>
<svg style="position:absolute;left:1063.00px;top:689.00px" width="8" height="8" viewBox="0 0 8 8"><circle cx="3.2" cy="3.2" r="2.3" fill="none" stroke="#2a6ad8" stroke-width="1"/><path d="M5 5L7.5 7.5" stroke="#555" stroke-width="1.2"/><path d="M2 3.2H4.4M3.2 2V4.4" stroke="#2a6ad8" stroke-width="0.8"/></svg>
<svg style="position:absolute;left:1075.00px;top:689.00px" width="8" height="8" viewBox="0 0 8 8"><circle cx="3.2" cy="3.2" r="2.3" fill="none" stroke="#2a6ad8" stroke-width="1"/><path d="M5 5L7.5 7.5" stroke="#555" stroke-width="1.2"/></svg>
<div style="left:1086.50px;top:688.50px;width:8.00px;height:10.00px;background:#c4c4c4;border:1px solid #a8a8a8;box-sizing:border-box"></div>
<div style="left:692.30px;top:84.00px;width:1.00px;height:588.00px;background:#d4d4d4"></div>
<div style="left:695.40px;top:69.40px;width:397.00px;height:501.00px;background:#f1f1f1;border:1px solid #d8d8d8;border-top:none;box-sizing:border-box"></div>
<div style="left:695.80px;top:56.30px;width:23.80px;height:13.00px;background:linear-gradient(#e9e9e9,#dcdcdc);border:1px solid #cdcdcd;border-bottom:none;box-sizing:border-box;border-radius:2px 2px 0 0"></div>
<div style="left:695.80px;top:68.60px;width:23.80px;height:1.60px;background:#3a3a3a"></div>
<div style="left:742.70px;top:56.30px;width:23.80px;height:13.00px;background:linear-gradient(#e9e9e9,#dcdcdc);border:1px solid #cdcdcd;border-bottom:none;box-sizing:border-box;border-radius:2px 2px 0 0"></div>
<div style="left:742.70px;top:68.60px;width:23.80px;height:1.60px;background:#3a3a3a"></div>
<div style="left:766.50px;top:56.30px;width:23.10px;height:13.00px;background:linear-gradient(#e9e9e9,#dcdcdc);border:1px solid #cdcdcd;border-bottom:none;box-sizing:border-box;border-radius:2px 2px 0 0"></div>
<div style="left:766.50px;top:68.60px;width:23.10px;height:1.60px;background:#3a3a3a"></div>
<div style="left:789.60px;top:56.30px;width:23.80px;height:13.00px;background:linear-gradient(#e9e9e9,#dcdcdc);border:1px solid #cdcdcd;border-bottom:none;box-sizing:border-box;border-radius:2px 2px 0 0"></div>
<div style="left:789.60px;top:68.60px;width:23.80px;height:1.60px;background:#3a3a3a"></div>
<div style="left:813.40px;top:56.30px;width:23.10px;height:13.00px;background:linear-gradient(#e9e9e9,#dcdcdc);border:1px solid #cdcdcd;border-bottom:none;box-sizing:border-box;border-radius:2px 2px 0 0"></div>
<div style="left:813.40px;top:68.60px;width:23.10px;height:1.60px;background:#3a3a3a"></div>
<div style="left:836.50px;top:56.30px;width:23.10px;height:13.00px;background:linear-gradient(#e9e9e9,#dcdcdc);border:1px solid #cdcdcd;border-bottom:none;box-sizing:border-box;border-radius:2px 2px 0 0"></div>
<div style="left:836.50px;top:68.60px;width:23.10px;height:1.60px;background:#3a3a3a"></div>
<div style="left:719.60px;top:55.60px;width:23.10px;height:14.50px;background:linear-gradient(#fbfbfb,#f1f1f1);border:1px solid #d6d6d6;border-bottom:none;box-sizing:border-box;border-radius:2px 2px 0 0"></div>
<svg style="position:absolute;left:702.00px;top:58.30px" width="8.00" height="8.00" viewBox="0 0 10 10"><circle cx="4" cy="4" r="3.3" fill="#3a8ae8"/><path d="M3 4V9M3 4H7V8H3" stroke="#111" stroke-width="1.3" fill="none"/></svg>
<svg style="position:absolute;left:726.50px;top:58.30px" width="8.00" height="8.00" viewBox="0 0 10 10"><rect x="2" y="1" width="6" height="1" fill="#e05050"/><path d="M2.5 3Q1 6 2.5 9M7.5 3Q9 6 7.5 9M4 4.5L6 7.5M6 4.5L4 7.5" stroke="#111" stroke-width="1" fill="none"/></svg>
<svg style="position:absolute;left:749.50px;top:58.30px" width="8.00" height="8.00" viewBox="0 0 10 10"><path d="M1 3H5" stroke="#2a8ae0" stroke-width="1.4"/><path d="M6 2V9M8 2V9" stroke="#6aaae8" stroke-width="1.4"/></svg>
<svg style="position:absolute;left:772.50px;top:58.30px" width="8.00" height="8.00" viewBox="0 0 10 10"><rect x="1" y="1" width="3" height="3" fill="#2a8ae0"/><rect x="4" y="4" width="3" height="3" fill="#2a8ae0"/><rect x="6" y="7" width="3" height="3" fill="#2a8ae0"/></svg>
<svg style="position:absolute;left:796.00px;top:58.30px" width="8.00" height="8.00" viewBox="0 0 10 10"><circle cx="5" cy="5" r="4" fill="#d01818"/><path d="M3.3 5H6.7" stroke="#fff" stroke-width="1.6"/></svg>
<svg style="position:absolute;left:819.50px;top:58.30px" width="8.00" height="8.00" viewBox="0 0 10 10"><circle cx="3" cy="5" r="1" fill="#222"/><circle cx="7" cy="5" r="1" fill="#222"/></svg>
<svg style="position:absolute;left:843.00px;top:58.30px" width="8.00" height="8.00" viewBox="0 0 10 10"><path d="M5 1L9.3 9H0.7Z" fill="none" stroke="#d83030" stroke-width="1.1"/></svg>
<div style="left:698.30px;top:71.40px;width:350.00px;height:12.00px;background:linear-gradient(#fcfcfc,#f2f2f2);border:1px solid #cacaca;box-sizing:border-box;border-radius:2px"></div>
<div class="t" style="left:700.80px;top:72.60px;font-size:7.4px;line-height:10px;color:#1e1e1e">hand.py:63:__getTitle</div>
<svg style="position:absolute;left:1041.00px;top:76.50px" width="5.00" height="3.00" viewBox="0 0 5 3"><path d="M0 0H5L2.5 3Z" fill="#333"/></svg>
<div style="left:1051.00px;top:71.40px;width:38.70px;height:12.00px;background:linear-gradient(#fcfcfc,#ececec);border:1px solid #c4c4c4;box-sizing:border-box;border-radius:2px"></div>
<div class="t" style="left:1051.00px;top:72.60px;font-size:7.4px;line-height:10px;color:#1e1e1e;width:38.7px;text-align:center">Source</div>
<div style="left:696.50px;top:86.50px;width:395.50px;height:464.00px;background:#fff;border:1px solid #c9c9c9;box-sizing:border-box"></div>
<div style="left:697.30px;top:87.30px;width:394.00px;height:9.50px;background:linear-gradient(#fafafa,#ececec)"></div>
<div style="left:797.80px;top:87.30px;width:1.00px;height:9.50px;background:#d6d6d6"></div>
<div style="left:966.80px;top:87.30px;width:1.00px;height:9.50px;background:#d6d6d6"></div>
<div style="left:697.30px;top:96.50px;width:394.00px;height:0.80px;background:#d6d6d6"></div>
<div class="t" style="left:698.50px;top:87.60px;font-size:7.4px;line-height:10px;color:#1e1e1e">Locals</div>
<svg style="position:absolute;left:791.50px;top:90.50px" width="5.00" height="3.00" viewBox="0 0 5 3"><path d="M0 0H5L2.5 3Z" fill="#333"/></svg>
<div class="t" style="left:801.00px;top:87.60px;font-size:7.4px;line-height:10px;color:#1e1e1e">Value</div>
<div class="t" style="left:969.30px;top:87.60px;font-size:7.4px;line-height:10px;color:#1e1e1e">Type</div>
<div style="left:697.30px;top:97.20px;width:394.00px;height:8.53px;background:#3d8ad8"></div>
<div class="t" style="left:708.80px;top:97.80px;font-size:7.4px;line-height:8.53px;color:#ffffff">self</div>
<div class="t" style="left:801.00px;top:97.80px;font-size:7.4px;line-height:8.53px;color:#ffffff">&lt;pokerlib.hand.Hand object at 0x7f6318b26cd0&gt;</div>
<div class="t" style="left:969.30px;top:97.80px;font-size:7.4px;line-height:8.53px;color:#ffffff">pokerlib.hand.Hand</div>
<svg style="position:absolute;left:699.20px;top:99.97px" width="5.00" height="3.00" viewBox="0 0 5 3"><path d="M0 0H5L2.5 3Z" fill="#0a0a0a"/></svg>
<div style="left:697.50px;top:105.73px;width:394.00px;height:8.53px;background:#f6f5f4"></div>
<div class="t" style="left:718.40px;top:106.33px;font-size:7.4px;line-height:8.53px;color:#1e1e1e">_Hand__cards[]</div>
<div class="t" style="left:801.00px;top:106.33px;font-size:7.4px;line-height:8.53px;color:#1e1e1e">5 items</div>
<div class="t" style="left:969.30px;top:106.33px;font-size:7.4px;line-height:8.53px;color:#1e1e1e">List/Array</div>
<svg style="position:absolute;left:710.10px;top:107.50px" width="3.00" height="5.00" viewBox="0 0 3 5"><path d="M0 0V5L3 2.5Z" fill="#111"/></svg>
<div class="t" style="left:718.40px;top:114.86px;font-size:7.4px;line-height:8.53px;color:#1e1e1e">_Hand__isHold[]</div>
<div class="t" style="left:801.00px;top:114.86px;font-size:7.4px;line-height:8.53px;color:#1e1e1e">5 items</div>
<div class="t" style="left:969.30px;top:114.86px;font-size:7.4px;line-height:8.53px;color:#1e1e1e">List/Array</div>
<svg style="position:absolute;left:710.10px;top:116.03px" width="3.00" height="5.00" viewBox="0 0 3 5"><path d="M0 0V5L3 2.5Z" fill="#111"/></svg>
<div style="left:697.50px;top:122.79px;width:394.00px;height:8.53px;background:#f6f5f4"></div>
<div class="t" style="left:718.40px;top:123.39px;font-size:7.4px;line-height:8.53px;color:#1e1e1e">_Hand__score</div>
<div class="t" style="left:801.00px;top:123.39px;font-size:7.4px;line-height:8.53px;color:#1e1e1e">-1</div>
<div class="t" style="left:969.30px;top:123.39px;font-size:7.4px;line-height:8.53px;color:#1e1e1e">Integer</div>
<div class="t" style="left:718.40px;top:131.92px;font-size:7.4px;line-height:8.53px;color:#1e1e1e">_Hand__titles[]</div>
<div class="t" style="left:801.00px;top:131.92px;font-size:7.4px;line-height:8.53px;color:#1e1e1e">11 items</div>
<div class="t" style="left:969.30px;top:131.92px;font-size:7.4px;line-height:8.53px;color:#1e1e1e">List/Array</div>
<svg style="position:absolute;left:709.10px;top:134.08px" width="5.00" height="3.00" viewBox="0 0 5 3"><path d="M0 0H5L2.5 3Z" fill="#111"/></svg>
<div style="left:697.50px;top:139.85px;width:394.00px;height:8.53px;background:#f6f5f4"></div>
<div class="t" style="left:728.40px;top:140.45px;font-size:7.4px;line-height:8.53px;color:#1e1e1e">0</div>
<div class="t" style="left:801.00px;top:140.45px;font-size:7.4px;line-height:8.53px;color:#1e1e1e">No Score</div>
<div class="t" style="left:969.30px;top:140.45px;font-size:7.4px;line-height:8.53px;color:#1e1e1e">String</div>
<div class="t" style="left:728.40px;top:148.98px;font-size:7.4px;line-height:8.53px;color:#1e1e1e">1</div>
<div class="t" style="left:801.00px;top:148.98px;font-size:7.4px;line-height:8.53px;color:#1e1e1e"></div>
<div class="t" style="left:969.30px;top:148.98px;font-size:7.4px;line-height:8.53px;color:#1e1e1e">String</div>
<div style="left:697.50px;top:156.91px;width:394.00px;height:8.53px;background:#f6f5f4"></div>
<div class="t" style="left:728.40px;top:157.51px;font-size:7.4px;line-height:8.53px;color:#1e1e1e">2</div>
<div class="t" style="left:801.00px;top:157.51px;font-size:7.4px;line-height:8.53px;color:#1e1e1e">Jacks or Better</div>
<div class="t" style="left:969.30px;top:157.51px;font-size:7.4px;line-height:8.53px;color:#1e1e1e">String</div>
<div class="t" style="left:728.40px;top:166.04px;font-size:7.4px;line-height:8.53px;color:#1e1e1e">3</div>
<div class="t" style="left:801.00px;top:166.04px;font-size:7.4px;line-height:8.53px;color:#1e1e1e">Two Pair</div>
<div class="t" style="left:969.30px;top:166.04px;font-size:7.4px;line-height:8.53px;color:#1e1e1e">String</div>
<div style="left:697.50px;top:173.97px;width:394.00px;height:8.53px;background:#f6f5f4"></div>
<div class="t" style="left:728.40px;top:174.57px;font-size:7.4px;line-height:8.53px;color:#1e1e1e">4</div>
<div class="t" style="left:801.00px;top:174.57px;font-size:7.4px;line-height:8.53px;color:#1e1e1e">Three of a Kind</div>
<div class="t" style="left:969.30px;top:174.57px;font-size:7.4px;line-height:8.53px;color:#1e1e1e">String</div>
<div class="t" style="left:728.40px;top:183.10px;font-size:7.4px;line-height:8.53px;color:#1e1e1e">5</div>
<div class="t" style="left:801.00px;top:183.10px;font-size:7.4px;line-height:8.53px;color:#1e1e1e">Straight</div>
<div class="t" style="left:969.30px;top:183.10px;font-size:7.4px;line-height:8.53px;color:#1e1e1e">String</div>
<div style="left:697.50px;top:191.03px;width:394.00px;height:8.53px;background:#f6f5f4"></div>
<div class="t" style="left:728.40px;top:191.63px;font-size:7.4px;line-height:8.53px;color:#1e1e1e">6</div>
<div class="t" style="left:801.00px;top:191.63px;font-size:7.4px;line-height:8.53px;color:#1e1e1e">Flush</div>
<div class="t" style="left:969.30px;top:191.63px;font-size:7.4px;line-height:8.53px;color:#1e1e1e">String</div>
<div class="t" style="left:728.40px;top:200.16px;font-size:7.4px;line-height:8.53px;color:#1e1e1e">7</div>
<div class="t" style="left:801.00px;top:200.16px;font-size:7.4px;line-height:8.53px;color:#1e1e1e">Full House</div>
<div class="t" style="left:969.30px;top:200.16px;font-size:7.4px;line-height:8.53px;color:#1e1e1e">String</div>
<div style="left:697.50px;top:208.09px;width:394.00px;height:8.53px;background:#f6f5f4"></div>
<div class="t" style="left:728.40px;top:208.69px;font-size:7.4px;line-height:8.53px;color:#1e1e1e">8</div>
<div class="t" style="left:801.00px;top:208.69px;font-size:7.4px;line-height:8.53px;color:#1e1e1e">Four of a Kind</div>
<div class="t" style="left:969.30px;top:208.69px;font-size:7.4px;line-height:8.53px;color:#1e1e1e">String</div>
<div class="t" style="left:728.40px;top:217.22px;font-size:7.4px;line-height:8.53px;color:#1e1e1e">9</div>
<div class="t" style="left:801.00px;top:217.22px;font-size:7.4px;line-height:8.53px;color:#1e1e1e">Straight Flush</div>
<div class="t" style="left:969.30px;top:217.22px;font-size:7.4px;line-height:8.53px;color:#1e1e1e">String</div>
<div style="left:697.50px;top:225.15px;width:394.00px;height:8.53px;background:#f6f5f4"></div>
<div class="t" style="left:728.40px;top:225.75px;font-size:7.4px;line-height:8.53px;color:#1e1e1e">10</div>
<div class="t" style="left:801.00px;top:225.75px;font-size:7.4px;line-height:8.53px;color:#1e1e1e">Royal Flush</div>
<div class="t" style="left:969.30px;top:225.75px;font-size:7.4px;line-height:8.53px;color:#1e1e1e">String</div>
<div style="left:698.20px;top:554.30px;width:350.50px;height:12.40px;background:#fff;border:1px solid #c6c6c6;box-sizing:border-box;border-radius:2px"></div>
<div style="left:1050.00px;top:554.30px;width:39.30px;height:12.30px;background:linear-gradient(#fcfcfc,#ececec);border:1px solid #c4c4c4;box-sizing:border-box;border-radius:2px"></div>
<div class="t" style="left:1050.00px;top:556.00px;font-size:7.4px;line-height:10px;color:#1e1e1e;width:39.3px;text-align:center">Set</div>
<div class="t" style="left:696.20px;top:572.00px;font-size:7.4px;line-height:10px;color:#1e1e1e">Threads:</div>
<div style="left:695.40px;top:583.90px;width:396.30px;height:103.00px;background:#fff;border:1px solid #c9c9c9;box-sizing:border-box"></div>
<div style="left:696.20px;top:584.70px;width:394.70px;height:9.70px;background:linear-gradient(#fafafa,#ececec)"></div>
<div style="left:767.80px;top:584.70px;width:1.00px;height:9.70px;background:#d6d6d6"></div>
<div style="left:810.00px;top:584.70px;width:1.00px;height:9.70px;background:#d6d6d6"></div>
<div style="left:881.00px;top:584.70px;width:1.00px;height:9.70px;background:#d6d6d6"></div>
<div style="left:696.20px;top:594.20px;width:394.70px;height:0.80px;background:#d6d6d6"></div>
<div class="t" style="left:697.50px;top:584.50px;font-size:7.4px;line-height:10px;color:#1e1e1e">ID</div>
<div class="t" style="left:770.80px;top:584.50px;font-size:7.4px;line-height:10px;color:#1e1e1e">Name</div>
<div class="t" style="left:811.90px;top:584.50px;font-size:7.4px;line-height:10px;color:#1e1e1e">State</div>
<svg style="position:absolute;left:761.50px;top:588.30px" width="5.00" height="3.00" viewBox="0 0 5 3"><path d="M0 3H5L2.5 0Z" fill="#333"/></svg>
<div class="t" style="left:697.40px;top:594.20px;font-size:7.2px;line-height:10px;color:#1e1e1e;width:70px;text-align:right">140063636776704</div>
<div class="t" style="left:770.80px;top:594.20px;font-size:7.4px;line-height:10px;color:#1e1e1e">MainThread</div>
<div class="t" style="left:811.90px;top:594.20px;font-size:7.4px;line-height:10px;color:#1e1e1e">waiting at breakpoint</div>
<div style="left:1092.70px;top:55.60px;width:11.60px;height:10.60px;background:linear-gradient(#f0f0f0,#e2e2e2);border:1px solid #c8c8c8;box-sizing:border-box;border-radius:2px"></div>
<svg style="position:absolute;left:1094.00px;top:57.00px" width="9.00" height="9.00" viewBox="0 0 9 9"><path d="M0.5 0.5H8.5L5.2 4.5V8.5H3.8V4.5Z" fill="#2a6ad8"/><path d="M0.5 0.5H8.5L4.5 3.8Z" fill="#80b0f0"/></svg>
<div style="left:1092.80px;top:67.00px;width:13.60px;height:154.00px;background:#e6e6e6;border:1px solid #c8c8c8;border-left:none;box-sizing:border-box"></div>
<div style="left:1092.80px;top:221.00px;width:13.60px;height:155.30px;background:#d3d3d3;border:1px solid #c0c0c0;border-left:none;border-top:none;box-sizing:border-box"></div>
<div style="left:1092.80px;top:376.30px;width:13.60px;height:154.30px;background:#d3d3d3;border:1px solid #c0c0c0;border-left:none;border-top:1px solid #b8b8b8;box-sizing:border-box"></div>
<div style="left:1104.30px;top:530.00px;width:1.00px;height:157.00px;background:#d0d0d0"></div>
<svg style="position:absolute;left:1095.00px;top:72.00px" width="9.00" height="7.00" viewBox="0 0 9 7"><ellipse cx="4.5" cy="3.5" rx="3.3" ry="2.6" fill="#c01010"/><circle cx="7.5" cy="3.5" r="1.2" fill="#222"/></svg>
<svg style="position:absolute;left:1095.00px;top:228.00px" width="8.00" height="8.00" viewBox="0 0 8 8"><circle cx="4" cy="4" r="3.2" fill="#111"/><path d="M3.5 2.5H5.5V5.5H3.5Z" fill="#eee"/></svg>
<svg style="position:absolute;left:1095.00px;top:382.50px" width="8.00" height="9.00" viewBox="0 0 8 9"><rect x="3.5" y="0.5" width="4" height="5" rx="1" fill="#2aa82a"/><rect x="0.5" y="3.5" width="4" height="5" rx="1" fill="#2a6ae8"/></svg>
<div class="t" style="left:1058.90px;top:144.00px;width:80px;height:10px;text-align:center;font-size:7.4px;line-height:10px;color:#222;transform:rotate(90deg)">Debug-Viewer</div>
<div class="t" style="left:1058.90px;top:299.00px;width:80px;height:10px;text-align:center;font-size:7.4px;line-height:10px;color:#222;transform:rotate(90deg)">Cooperation</div>
<div class="t" style="left:1058.90px;top:453.50px;width:80px;height:10px;text-align:center;font-size:7.4px;line-height:10px;color:#222;transform:rotate(90deg)">IRC</div></div></body></html>
